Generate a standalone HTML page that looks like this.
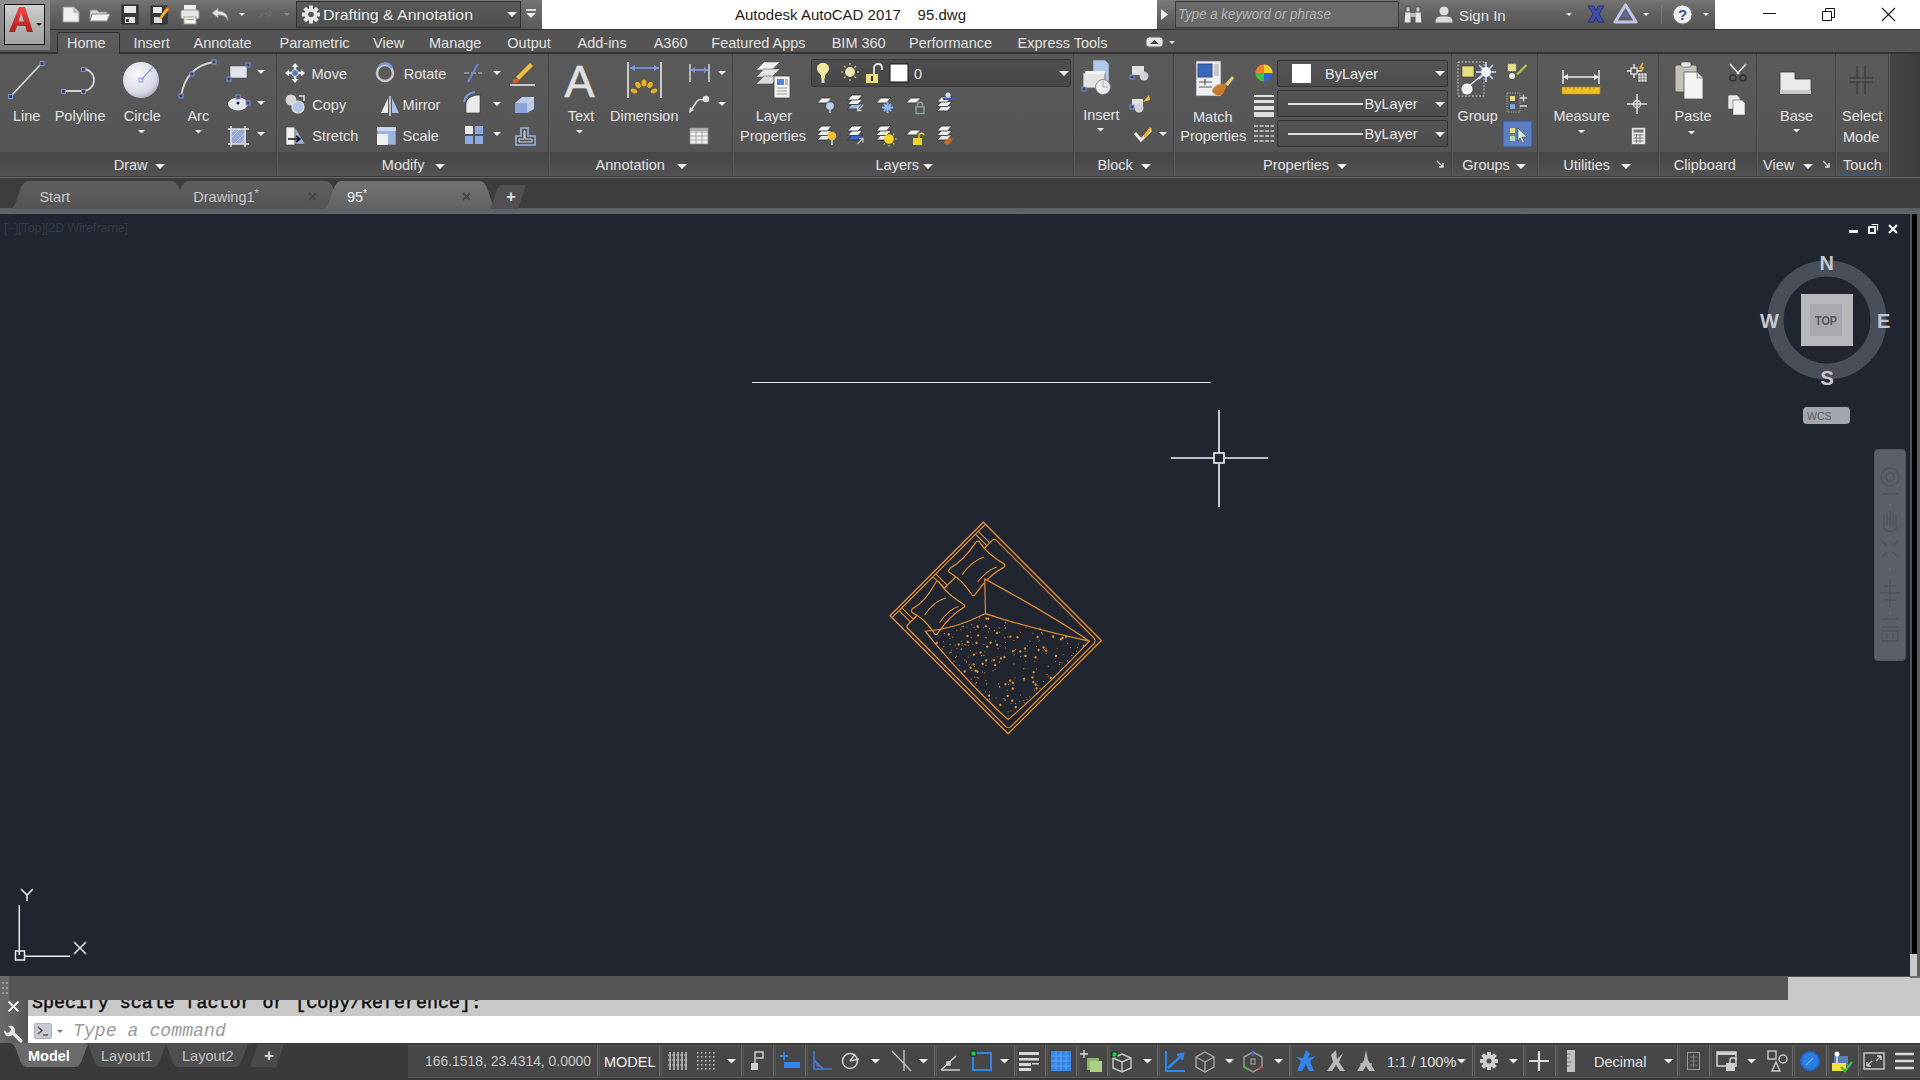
<!DOCTYPE html>
<html><head><meta charset="utf-8">
<style>
*{margin:0;padding:0;box-sizing:border-box}
html,body{width:1920px;height:1080px;overflow:hidden;background:#212530;font-family:"Liberation Sans",sans-serif;position:relative}
.a{position:absolute}
svg.a{overflow:visible}
.t{position:absolute;white-space:nowrap;line-height:1}
</style></head><body>

<div class="a" style="left:0px;top:0px;width:1920px;height:29px;background:linear-gradient(#747474,#626262 45%,#535353);"></div>
<div class="a" style="left:542px;top:0px;width:615px;height:29px;background:#ffffff;"></div>
<div class="a" style="left:1715px;top:0px;width:205px;height:29px;background:#ffffff;"></div>
<div class="a" style="left:296px;top:1px;width:225px;height:27px;background:linear-gradient(#5a5a5a,#4f4f4f);border:1px solid #2f2f2f"></div>
<div class="t" style="left:323px;top:6.80px;font-size:15px;color:#ececec;font-weight:normal;font-style:normal;font-family:'Liberation Sans';transform:scaleX(1.058);transform-origin:0 0">Drafting &amp; Annotation</div>
<svg class="a" style="left:507px;top:11.5px" width="10" height="5"><path d="M0 0H10L5 5Z" fill="#f0f0f0"/></svg>
<div class="a" style="left:521px;top:0px;width:21px;height:29px;background:linear-gradient(#737373,#5a5a5a);"></div>
<div class="t" style="left:735px;top:7.30px;font-size:15px;color:#1c1c1c;font-weight:normal;font-style:normal;font-family:'Liberation Sans';">Autodesk AutoCAD 2017&nbsp;&nbsp;&nbsp;&nbsp;95.dwg</div>
<div class="a" style="left:1157px;top:0px;width:18px;height:29px;background:linear-gradient(#7a7a7a,#555);"></div>
<svg class="a" style="left:1161px;top:9px" width="7" height="11"><path d="M0 0L7 5.5L0 11Z" fill="#eee"/></svg>
<div class="a" style="left:1175px;top:1px;width:224px;height:27px;background:#6a6a6a;border:1px solid #3a3a3a"></div>
<div class="t" style="left:1178px;top:7.15px;font-size:14px;color:#b4b4b4;font-weight:normal;font-style:italic;font-family:'Liberation Sans';transform:scaleX(0.95);transform-origin:0 0">Type a keyword or phrase</div>
<div class="a" style="left:1763px;top:13px;width:13px;height:1px;background:#111;"></div>
<svg class="a" style="left:1822px;top:8px" width="13" height="13"><path d="M0.5 3.5H9.5V12.5H0.5Z M3.5 3.5V0.5H12.5V9.5H9.5" fill="none" stroke="#111"/></svg>
<svg class="a" style="left:1882px;top:8px" width="13" height="13"><path d="M0 0L13 13M13 0L0 13" stroke="#111" stroke-width="1.1"/></svg>
<div class="t" style="left:1459px;top:7.60px;font-size:15px;color:#e6e6e6;font-weight:normal;font-style:normal;font-family:'Liberation Sans';">Sign In</div>
<div class="a" style="left:0px;top:29px;width:1920px;height:25px;background:#545454;border-top:1px solid #333"></div>
<div class="a" style="left:0px;top:52px;width:1920px;height:1.5px;background:#333333;"></div>
<div class="a" style="left:57px;top:32px;width:63px;height:23px;background:linear-gradient(#5c5c5c,#585858);border:1.5px solid #2e2e2e;border-bottom:none;border-radius:2px 2px 0 0"></div>
<div class="t" style="left:67px;top:35.73px;font-size:14.5px;color:#e2e2e2;font-weight:normal;font-style:normal;font-family:'Liberation Sans';">Home</div>
<div class="t" style="left:133.5px;top:35.73px;font-size:14.5px;color:#e2e2e2;font-weight:normal;font-style:normal;font-family:'Liberation Sans';">Insert</div>
<div class="t" style="left:193.5px;top:35.73px;font-size:14.5px;color:#e2e2e2;font-weight:normal;font-style:normal;font-family:'Liberation Sans';">Annotate</div>
<div class="t" style="left:279.5px;top:35.73px;font-size:14.5px;color:#e2e2e2;font-weight:normal;font-style:normal;font-family:'Liberation Sans';">Parametric</div>
<div class="t" style="left:373px;top:35.73px;font-size:14.5px;color:#e2e2e2;font-weight:normal;font-style:normal;font-family:'Liberation Sans';">View</div>
<div class="t" style="left:429px;top:35.73px;font-size:14.5px;color:#e2e2e2;font-weight:normal;font-style:normal;font-family:'Liberation Sans';">Manage</div>
<div class="t" style="left:507.3px;top:35.73px;font-size:14.5px;color:#e2e2e2;font-weight:normal;font-style:normal;font-family:'Liberation Sans';">Output</div>
<div class="t" style="left:577.5px;top:35.73px;font-size:14.5px;color:#e2e2e2;font-weight:normal;font-style:normal;font-family:'Liberation Sans';">Add-ins</div>
<div class="t" style="left:653.7px;top:35.73px;font-size:14.5px;color:#e2e2e2;font-weight:normal;font-style:normal;font-family:'Liberation Sans';">A360</div>
<div class="t" style="left:711.3px;top:35.73px;font-size:14.5px;color:#e2e2e2;font-weight:normal;font-style:normal;font-family:'Liberation Sans';">Featured Apps</div>
<div class="t" style="left:831.7px;top:35.73px;font-size:14.5px;color:#e2e2e2;font-weight:normal;font-style:normal;font-family:'Liberation Sans';">BIM 360</div>
<div class="t" style="left:909px;top:35.73px;font-size:14.5px;color:#e2e2e2;font-weight:normal;font-style:normal;font-family:'Liberation Sans';">Performance</div>
<div class="t" style="left:1017.6px;top:35.73px;font-size:14.5px;color:#e2e2e2;font-weight:normal;font-style:normal;font-family:'Liberation Sans';">Express Tools</div>
<div class="a" style="left:0px;top:0px;width:50px;height:50px;background:linear-gradient(#8e8e8e,#8a8a8a 60%,#7e7e7e);"></div>
<div class="a" style="left:4px;top:4px;width:41px;height:41px;background:linear-gradient(#d0d0d0,#b4b4b4 50%,#a4a4a4);border:1.5px solid #111"></div>
<svg class="a" style="left:6.5px;top:5px;" width="30" height="30" viewBox="0 0 30 30"><defs><linearGradient id="ga" x1="0" y1="0" x2="0" y2="1"><stop offset="0" stop-color="#f04848"/><stop offset="1" stop-color="#b01c1c"/></linearGradient></defs><path d="M2 27L12 2H18L26 27H20L18.3 21H10L8 27Z M11.5 16.5H16.8L14.2 7.5Z" fill="url(#ga)" fill-rule="evenodd"/></svg>
<svg class="a" style="left:36px;top:22.5px" width="6" height="3"><path d="M0 0H6L3 3Z" fill="#222"/></svg>
<div class="a" style="left:0px;top:54px;width:1920px;height:123px;background:linear-gradient(#5a5a5a,#535353);"></div>
<div class="a" style="left:1888px;top:54px;width:32px;height:123px;background:linear-gradient(90deg,#474747,#3c3c3c);"></div>
<div class="a" style="left:0px;top:152px;width:1888px;height:24px;background:linear-gradient(#464646,#4e4e4e 60%,#525252);"></div>
<div class="a" style="left:0px;top:176px;width:1920px;height:1px;background:#3a3a3a;"></div>
<div class="a" style="left:276px;top:54px;width:1px;height:122px;background:#444;"></div>
<div class="a" style="left:277px;top:54px;width:1px;height:122px;background:#5c5c5c;"></div>
<div class="a" style="left:548px;top:54px;width:1px;height:122px;background:#444;"></div>
<div class="a" style="left:549px;top:54px;width:1px;height:122px;background:#5c5c5c;"></div>
<div class="a" style="left:732px;top:54px;width:1px;height:122px;background:#444;"></div>
<div class="a" style="left:733px;top:54px;width:1px;height:122px;background:#5c5c5c;"></div>
<div class="a" style="left:1073px;top:54px;width:1px;height:122px;background:#444;"></div>
<div class="a" style="left:1074px;top:54px;width:1px;height:122px;background:#5c5c5c;"></div>
<div class="a" style="left:1173px;top:54px;width:1px;height:122px;background:#444;"></div>
<div class="a" style="left:1174px;top:54px;width:1px;height:122px;background:#5c5c5c;"></div>
<div class="a" style="left:1451px;top:54px;width:1px;height:122px;background:#444;"></div>
<div class="a" style="left:1452px;top:54px;width:1px;height:122px;background:#5c5c5c;"></div>
<div class="a" style="left:1537px;top:54px;width:1px;height:122px;background:#444;"></div>
<div class="a" style="left:1538px;top:54px;width:1px;height:122px;background:#5c5c5c;"></div>
<div class="a" style="left:1658px;top:54px;width:1px;height:122px;background:#444;"></div>
<div class="a" style="left:1659px;top:54px;width:1px;height:122px;background:#5c5c5c;"></div>
<div class="a" style="left:1756px;top:54px;width:1px;height:122px;background:#444;"></div>
<div class="a" style="left:1757px;top:54px;width:1px;height:122px;background:#5c5c5c;"></div>
<div class="a" style="left:1835px;top:54px;width:1px;height:122px;background:#444;"></div>
<div class="a" style="left:1836px;top:54px;width:1px;height:122px;background:#5c5c5c;"></div>
<div class="a" style="left:1888px;top:54px;width:1px;height:122px;background:#444;"></div>
<div class="a" style="left:1889px;top:54px;width:1px;height:122px;background:#5c5c5c;"></div>
<div class="t" style="left:13px;top:108.73px;font-size:14.5px;color:#e4e4e4;font-weight:normal;font-style:normal;font-family:'Liberation Sans';">Line</div>
<div class="t" style="left:54.7px;top:108.73px;font-size:14.5px;color:#e4e4e4;font-weight:normal;font-style:normal;font-family:'Liberation Sans';">Polyline</div>
<div class="t" style="left:123.7px;top:108.73px;font-size:14.5px;color:#e4e4e4;font-weight:normal;font-style:normal;font-family:'Liberation Sans';">Circle</div>
<div class="t" style="left:187.4px;top:108.73px;font-size:14.5px;color:#e4e4e4;font-weight:normal;font-style:normal;font-family:'Liberation Sans';">Arc</div>
<div class="t" style="left:113.7px;top:158.43px;font-size:14.5px;color:#e4e4e4;font-weight:normal;font-style:normal;font-family:'Liberation Sans';">Draw</div>
<svg class="a" style="left:155px;top:163.5px" width="10" height="5"><path d="M0 0H10L5 5Z" fill="#f0f0f0"/></svg>
<svg class="a" style="left:137.5px;top:130.25px" width="7.0" height="3.5"><path d="M0 0H7.0L3.5 3.5Z" fill="#f0f0f0"/></svg>
<svg class="a" style="left:194.5px;top:130.25px" width="7.0" height="3.5"><path d="M0 0H7.0L3.5 3.5Z" fill="#f0f0f0"/></svg>
<div class="t" style="left:311.5px;top:66.73px;font-size:14.5px;color:#e4e4e4;font-weight:normal;font-style:normal;font-family:'Liberation Sans';">Move</div>
<div class="t" style="left:403.7px;top:66.73px;font-size:14.5px;color:#e4e4e4;font-weight:normal;font-style:normal;font-family:'Liberation Sans';">Rotate</div>
<div class="t" style="left:312.3px;top:97.73px;font-size:14.5px;color:#e4e4e4;font-weight:normal;font-style:normal;font-family:'Liberation Sans';">Copy</div>
<div class="t" style="left:402.6px;top:97.73px;font-size:14.5px;color:#e4e4e4;font-weight:normal;font-style:normal;font-family:'Liberation Sans';">Mirror</div>
<div class="t" style="left:312.3px;top:128.73px;font-size:14.5px;color:#e4e4e4;font-weight:normal;font-style:normal;font-family:'Liberation Sans';">Stretch</div>
<div class="t" style="left:402.5px;top:128.73px;font-size:14.5px;color:#e4e4e4;font-weight:normal;font-style:normal;font-family:'Liberation Sans';">Scale</div>
<div class="t" style="left:381.8px;top:158.03px;font-size:14.5px;color:#e4e4e4;font-weight:normal;font-style:normal;font-family:'Liberation Sans';">Modify</div>
<svg class="a" style="left:435px;top:163.5px" width="10" height="5"><path d="M0 0H10L5 5Z" fill="#f0f0f0"/></svg>
<div class="t" style="left:567.7px;top:108.73px;font-size:14.5px;color:#e4e4e4;font-weight:normal;font-style:normal;font-family:'Liberation Sans';">Text</div>
<svg class="a" style="left:575.9px;top:130.25px" width="7.0" height="3.5"><path d="M0 0H7.0L3.5 3.5Z" fill="#f0f0f0"/></svg>
<div class="t" style="left:610px;top:108.73px;font-size:14.5px;color:#e4e4e4;font-weight:normal;font-style:normal;font-family:'Liberation Sans';">Dimension</div>
<div class="t" style="left:595.6px;top:158.03px;font-size:14.5px;color:#e4e4e4;font-weight:normal;font-style:normal;font-family:'Liberation Sans';">Annotation</div>
<svg class="a" style="left:676.7px;top:163.5px" width="10" height="5"><path d="M0 0H10L5 5Z" fill="#f0f0f0"/></svg>
<div class="t" style="left:755.7px;top:108.73px;font-size:14.5px;color:#e4e4e4;font-weight:normal;font-style:normal;font-family:'Liberation Sans';">Layer</div>
<div class="t" style="left:740px;top:128.73px;font-size:14.5px;color:#e4e4e4;font-weight:normal;font-style:normal;font-family:'Liberation Sans';">Properties</div>
<div class="t" style="left:875.5px;top:158.03px;font-size:14.5px;color:#e4e4e4;font-weight:normal;font-style:normal;font-family:'Liberation Sans';">Layers</div>
<svg class="a" style="left:923px;top:163.5px" width="10" height="5"><path d="M0 0H10L5 5Z" fill="#f0f0f0"/></svg>
<div class="t" style="left:1083.2px;top:108.23px;font-size:14.5px;color:#e4e4e4;font-weight:normal;font-style:normal;font-family:'Liberation Sans';">Insert</div>
<svg class="a" style="left:1096.5px;top:128.25px" width="7.0" height="3.5"><path d="M0 0H7.0L3.5 3.5Z" fill="#f0f0f0"/></svg>
<div class="t" style="left:1097.4px;top:158.43px;font-size:14.5px;color:#e4e4e4;font-weight:normal;font-style:normal;font-family:'Liberation Sans';">Block</div>
<svg class="a" style="left:1141px;top:163.5px" width="10" height="5"><path d="M0 0H10L5 5Z" fill="#f0f0f0"/></svg>
<div class="t" style="left:1193px;top:109.73px;font-size:14.5px;color:#e4e4e4;font-weight:normal;font-style:normal;font-family:'Liberation Sans';">Match</div>
<div class="t" style="left:1180.3px;top:129.43px;font-size:14.5px;color:#e4e4e4;font-weight:normal;font-style:normal;font-family:'Liberation Sans';">Properties</div>
<div class="t" style="left:1263px;top:158.43px;font-size:14.5px;color:#e4e4e4;font-weight:normal;font-style:normal;font-family:'Liberation Sans';">Properties</div>
<svg class="a" style="left:1337px;top:163.5px" width="10" height="5"><path d="M0 0H10L5 5Z" fill="#f0f0f0"/></svg>
<div class="t" style="left:1457.4px;top:108.53px;font-size:14.5px;color:#e4e4e4;font-weight:normal;font-style:normal;font-family:'Liberation Sans';">Group</div>
<div class="t" style="left:1462.3px;top:158.03px;font-size:14.5px;color:#e4e4e4;font-weight:normal;font-style:normal;font-family:'Liberation Sans';">Groups</div>
<svg class="a" style="left:1516px;top:163.5px" width="10" height="5"><path d="M0 0H10L5 5Z" fill="#f0f0f0"/></svg>
<div class="t" style="left:1553.4px;top:108.73px;font-size:14.5px;color:#e4e4e4;font-weight:normal;font-style:normal;font-family:'Liberation Sans';">Measure</div>
<svg class="a" style="left:1577.5px;top:130.25px" width="7.0" height="3.5"><path d="M0 0H7.0L3.5 3.5Z" fill="#f0f0f0"/></svg>
<div class="t" style="left:1563.3px;top:158.03px;font-size:14.5px;color:#e4e4e4;font-weight:normal;font-style:normal;font-family:'Liberation Sans';">Utilities</div>
<svg class="a" style="left:1621px;top:163.5px" width="10" height="5"><path d="M0 0H10L5 5Z" fill="#f0f0f0"/></svg>
<div class="t" style="left:1674.6px;top:108.73px;font-size:14.5px;color:#e4e4e4;font-weight:normal;font-style:normal;font-family:'Liberation Sans';">Paste</div>
<svg class="a" style="left:1687.5px;top:131.25px" width="7.0" height="3.5"><path d="M0 0H7.0L3.5 3.5Z" fill="#f0f0f0"/></svg>
<div class="t" style="left:1673.8px;top:158.03px;font-size:14.5px;color:#e4e4e4;font-weight:normal;font-style:normal;font-family:'Liberation Sans';">Clipboard</div>
<div class="t" style="left:1780px;top:108.73px;font-size:14.5px;color:#e4e4e4;font-weight:normal;font-style:normal;font-family:'Liberation Sans';">Base</div>
<svg class="a" style="left:1792.5px;top:129.25px" width="7.0" height="3.5"><path d="M0 0H7.0L3.5 3.5Z" fill="#f0f0f0"/></svg>
<div class="t" style="left:1763px;top:158.03px;font-size:14.5px;color:#e4e4e4;font-weight:normal;font-style:normal;font-family:'Liberation Sans';">View</div>
<svg class="a" style="left:1803px;top:163.5px" width="10" height="5"><path d="M0 0H10L5 5Z" fill="#f0f0f0"/></svg>
<svg class="a" style="left:1821px;top:159px;" width="10" height="10" viewBox="0 0 10 10"><path d="M2 2L8 8M8 4V8H4" fill="none" stroke="#e0e0e0" stroke-width="1.3"/></svg>
<div class="a" style="left:1838px;top:174px;width:48px;height:2px;background:#3a5a7a;"></div>
<div class="t" style="left:1842px;top:108.73px;font-size:14.5px;color:#e4e4e4;font-weight:normal;font-style:normal;font-family:'Liberation Sans';">Select</div>
<div class="t" style="left:1843px;top:129.53px;font-size:14.5px;color:#e4e4e4;font-weight:normal;font-style:normal;font-family:'Liberation Sans';">Mode</div>
<div class="t" style="left:1843px;top:158.03px;font-size:14.5px;color:#e4e4e4;font-weight:normal;font-style:normal;font-family:'Liberation Sans';">Touch</div>
<svg class="a" style="left:62px;top:6px;" width="18" height="17" viewBox="0 0 18 17"><path d="M1 1H12L17 6V16H1Z" fill="#efefef" stroke="#9a9a9a" stroke-width="1"/><path d="M12 1V6H17" fill="#cfcfcf" stroke="#9a9a9a"/></svg>
<svg class="a" style="left:89px;top:7px;" width="22" height="15" viewBox="0 0 22 15"><path d="M1 3H8L10 5H18V14H1Z" fill="#d8d8d8" stroke="#8a8a8a"/><path d="M3 7H21L18 14H1Z" fill="#f2f2f2" stroke="#8a8a8a"/></svg>
<svg class="a" style="left:121px;top:4px;" width="18" height="21" viewBox="0 0 18 21"><rect x="1" y="1" width="16" height="19" fill="#3a3a3a" stroke="#2a2a2a"/><rect x="3" y="2" width="12" height="7" fill="#e8e8e8"/><rect x="4" y="13" width="10" height="6" fill="#dcdcdc"/><rect x="5" y="15" width="3" height="3" fill="#333"/></svg>
<svg class="a" style="left:150px;top:4px;" width="20" height="21" viewBox="0 0 20 21"><rect x="1" y="2" width="16" height="18" fill="#3a3a3a" stroke="#2a2a2a"/><rect x="3" y="3" width="9" height="6" fill="#e8e8e8"/><rect x="4" y="13" width="8" height="6" fill="#dcdcdc"/><path d="M9 14L17 3L19.5 5L11 15.5Z" fill="#f0b030"/><path d="M17 3L19.5 5L18.5 6L16 4Z" fill="#e05050"/></svg>
<svg class="a" style="left:180px;top:4px;" width="20" height="21" viewBox="0 0 20 21"><rect x="4" y="1" width="12" height="6" fill="#f0f0f0"/><rect x="1" y="6" width="18" height="9" rx="2" fill="#e8e8e8" stroke="#999"/><rect x="4" y="13" width="12" height="7" fill="#fafafa" stroke="#9a9a9a"/><rect x="6" y="15" width="8" height="1" fill="#7aa0d8"/></svg>
<svg class="a" style="left:211px;top:7px;" width="19" height="15" viewBox="0 0 19 15"><path d="M7 1L1 6L7 11V8C12 8 15 9 17 14C17 7 13 4 7 4Z" fill="#e4e4e4" stroke="#8a8a8a"/></svg>
<svg class="a" style="left:239px;top:12.5px" width="6" height="3"><path d="M0 0H6L3 3Z" fill="#eaeaea"/></svg>
<svg class="a" style="left:257px;top:7px;" width="18" height="15" viewBox="0 0 18 15"><path d="M11 1L17 6L11 11V8C6 8 3 9 1 14C1 7 5 4 11 4Z" fill="#6a6a6a" stroke="#606060"/></svg>
<svg class="a" style="left:284px;top:12.5px" width="6" height="3"><path d="M0 0H6L3 3Z" fill="#8a8a8a"/></svg>
<svg class="a" style="left:302px;top:5px;" width="18" height="19" viewBox="0 0 18 19"><g transform="translate(9 9.5)"><circle r="6.3" fill="#e6e6e6"/><g fill="#e6e6e6"><rect x="-2" y="-9" width="4" height="4"/><rect x="-2" y="5" width="4" height="4"/><rect x="-9" y="-2" width="4" height="4"/><rect x="5" y="-2" width="4" height="4"/><rect x="-2" y="-9" width="4" height="4" transform="rotate(45)"/><rect x="-2" y="5" width="4" height="4" transform="rotate(45)"/><rect x="-9" y="-2" width="4" height="4" transform="rotate(45)"/><rect x="5" y="-2" width="4" height="4" transform="rotate(45)"/></g><circle r="2.8" fill="#555"/></g></svg>
<svg class="a" style="left:525px;top:8px;" width="12" height="12" viewBox="0 0 12 12"><rect x="1" y="1" width="10" height="2" fill="#ddd"/><path d="M1 5H11L6 10Z" fill="#eee"/></svg>
<svg class="a" style="left:1403px;top:5px;" width="20" height="19" viewBox="0 0 20 19"><path d="M2 6H8V18H1Z M12 6H18L19 18H12Z" fill="#e6e6e6" stroke="#555"/><rect x="3" y="2" width="4" height="5" fill="#d0d0d0" stroke="#555"/><rect x="13" y="2" width="4" height="5" fill="#d0d0d0" stroke="#555"/><rect x="7" y="8" width="6" height="4" fill="#bbb"/></svg>
<svg class="a" style="left:1434px;top:4px;" width="20" height="20" viewBox="0 0 20 20"><circle cx="10" cy="7" r="5" fill="#e0e0e0" stroke="#666"/><path d="M1 19C1 12 5 12 10 12C15 12 19 12 19 19Z" fill="#dcdcdc" stroke="#666"/></svg>
<svg class="a" style="left:1566px;top:12.5px" width="6" height="3"><path d="M0 0H6L3 3Z" fill="#eee"/></svg>
<svg class="a" style="left:1586px;top:4px;" width="20" height="20" viewBox="0 0 20 20"><path d="M2 2H8L10 7L12 2H18L13 10L18 18H12L10 13L8 18H2L7 10Z" fill="#4050a8" stroke="#2a3370"/></svg>
<svg class="a" style="left:1613px;top:3px;" width="25" height="22" viewBox="0 0 25 22"><path d="M12.5 2L23 19H2Z" fill="none" stroke="#c0c4e8" stroke-width="3.2" stroke-linejoin="round"/><path d="M12.5 8L16 14H9Z" fill="#5a6ab8"/></svg>
<svg class="a" style="left:1643px;top:12.5px" width="6" height="3"><path d="M0 0H6L3 3Z" fill="#eee"/></svg>
<div class="a" style="left:1661px;top:5px;width:1px;height:19px;background:#7a7a7a;"></div>
<svg class="a" style="left:1672px;top:4px;" width="21" height="21" viewBox="0 0 21 21"><circle cx="10.5" cy="10.5" r="9.5" fill="#f0f0f0" stroke="#777"/><text x="10.5" y="16" text-anchor="middle" font-family="Liberation Sans" font-weight="bold" font-size="15" fill="#3a4cb0">?</text></svg>
<svg class="a" style="left:1703px;top:12.5px" width="6" height="3"><path d="M0 0H6L3 3Z" fill="#eee"/></svg>
<svg class="a" style="left:1145px;top:36px;" width="19" height="12" viewBox="0 0 19 12"><rect x="1" y="1" width="17" height="10" rx="3" fill="#e6e6e6" stroke="#666"/><path d="M5 8L9.5 4L14 8Z" fill="#444"/></svg>
<svg class="a" style="left:1169px;top:40.5px" width="6" height="3"><path d="M0 0H6L3 3Z" fill="#eee"/></svg>
<svg class="a" style="left:0px;top:54px;" width="276" height="98" viewBox="0 0 276 98"><path d="M11 42L41 10" stroke="#d4d4d4" stroke-width="1.8"/><rect x="8.5" y="40.5" width="4" height="4" fill="#3d4660" stroke="#7c94dc" stroke-width="1"/><rect x="40" y="7.5" width="4" height="4" fill="#3d4660" stroke="#7c94dc" stroke-width="1"/><path d="M64 37H83A11 11 0 0 0 83 15" fill="none" stroke="#d4d4d4" stroke-width="1.8"/><rect x="61.5" y="35.5" width="4" height="4" fill="#3d4660" stroke="#7c94dc" stroke-width="1"/><rect x="81.5" y="35.5" width="4" height="4" fill="#3d4660" stroke="#7c94dc" stroke-width="1"/><rect x="81.5" y="13.5" width="4" height="4" fill="#3d4660" stroke="#7c94dc" stroke-width="1"/><defs><radialGradient id="gc" cx="0.4" cy="0.35" r="0.75"><stop offset="0" stop-color="#fbfbff"/><stop offset="0.7" stop-color="#d6d8e4"/><stop offset="1" stop-color="#9a9ca8"/></radialGradient></defs><circle cx="141" cy="26" r="18" fill="url(#gc)"/><path d="M141 26L153 13" stroke="#8aa4e8" stroke-width="1.2"/><rect x="139" y="24" width="4" height="4" fill="none" stroke="#8aa4e8"/><path d="M181 43C184 22 195 11 214 8" fill="none" stroke="#d4d4d4" stroke-width="1.8"/><rect x="179" y="40" width="4" height="4" fill="#3d4660" stroke="#7c94dc" stroke-width="1"/><rect x="190" y="18" width="4" height="4" fill="#3d4660" stroke="#7c94dc" stroke-width="1"/><rect x="212" y="6" width="4" height="4" fill="#3d4660" stroke="#7c94dc" stroke-width="1"/><rect x="230" y="12" width="17" height="12" fill="#e4e4ec" stroke="#444" stroke-width="0.5"/><rect x="227" y="23" width="4" height="4" fill="#3d4660" stroke="#7c94dc" stroke-width="1"/><rect x="246" y="9" width="4" height="4" fill="#3d4660" stroke="#7c94dc" stroke-width="1"/><ellipse cx="238" cy="50" rx="10" ry="6.5" fill="#e4e4ec"/><circle cx="238" cy="49" r="1.5" fill="#222"/><rect x="236" y="41" width="4" height="4" fill="#3d4660" stroke="#7c94dc" stroke-width="1"/><rect x="246" y="47" width="4" height="4" fill="#3d4660" stroke="#7c94dc" stroke-width="1"/><rect x="230" y="75" width="16" height="15" fill="#9aa8d8"/><path d="M230 85L240 75M234 90L246 78M230 80L235 75M240 90L246 84" stroke="#c8d0f0" stroke-width="1"/><path d="M228 75H249M228 90H249M231 72V93M245 72V93" stroke="#e0e0e0" stroke-width="1.5"/></svg>
<svg class="a" style="left:257px;top:70.0px" width="8" height="4"><path d="M0 0H8L4 4Z" fill="#f0f0f0"/></svg>
<svg class="a" style="left:257px;top:101.0px" width="8" height="4"><path d="M0 0H8L4 4Z" fill="#f0f0f0"/></svg>
<svg class="a" style="left:257px;top:132.0px" width="8" height="4"><path d="M0 0H8L4 4Z" fill="#f0f0f0"/></svg>
<svg class="a" style="left:276px;top:54px;" width="272" height="98" viewBox="0 0 272 98"><path d="M19 13V25M13 19H25" stroke="#e8e8e8" stroke-width="2.4"/><path d="M19 9L15.5 13H22.5Z M19 29L15.5 25H22.5Z M9 19L13 15.5V22.5Z M29 19L25 15.5V22.5Z" fill="#f0f0f0"/><circle cx="19" cy="19" r="3.5" fill="#5a78c8" stroke="#dde" stroke-width="1"/><circle cx="109" cy="19" r="8" fill="none" stroke="#c8c8c8" stroke-width="2.5"/><path d="M103 12A8 8 0 0 1 116 14" fill="none" stroke="#7c98d8" stroke-width="2.5"/><circle cx="15" cy="46" r="5.5" fill="#d8d8d8"/><circle cx="22" cy="53" r="6" fill="#b0c4e8" stroke="#e8e8e8" stroke-width="1.2"/><path d="M23 42H28V47" fill="none" stroke="#e0e0e0" stroke-width="1.5"/><path d="M114 42V62" stroke="#e0e0e0" stroke-width="1.5"/><path d="M112 44L105 59H112Z" fill="#e8e8e8"/><path d="M116 44L123 59H116Z" fill="#a8bde8"/><rect x="10" y="73" width="9" height="18" fill="#f0f0f0" stroke="#444" stroke-width="0.7"/><path d="M19 73L29 90H19Z" fill="#9ab4e0" stroke="#444" stroke-width="0.5"/><path d="M12 85H23M20 82L24 85L20 88" fill="none" stroke="#111" stroke-width="1.6"/><rect x="101" y="73" width="19" height="18" fill="#9ab4e0" stroke="#444" stroke-width="0.5"/><rect x="101" y="80" width="11" height="11" fill="#f0f0f0"/><rect x="101" y="73" width="19" height="4" fill="#c8d6f0"/><path d="M188 19H206" stroke="#9aa0b0" stroke-width="1.5" stroke-dasharray="5 2"/><path d="M192 28L202 10" stroke="#6c8cd8" stroke-width="1.8"/><path d="M240 23L254 9L257 12L243 26Z" fill="#f0c040"/><path d="M238 25C236 27 237 29 239 29C242 29 244 27 243 25Z" fill="#e05a28"/><path d="M234 31H259" stroke="#e8e8e8" stroke-width="1.6"/><path d="M190 59V50C190 45 195 41 204 41V59Z" fill="#eaeaea" stroke="#333" stroke-width="0.6"/><path d="M188 48C189 43 193 39 199 38" fill="none" stroke="#7c98d8" stroke-width="2"/><path d="M239 49L246 43H258L258 55L251 59H239Z" fill="#b8c8e8"/><path d="M239 49H251V59H239Z" fill="#8aa6d8"/><path d="M251 49L258 43" stroke="#e8e8e8"/><rect x="189" y="72" width="8" height="8" fill="#e8e8e8"/><rect x="199" y="72" width="8" height="8" fill="#8aaae0"/><rect x="189" y="82" width="8" height="8" fill="#8aaae0"/><rect x="199" y="82" width="8" height="8" fill="#8aaae0"/><path d="M240 91V82H245V74H252V82H259V91Z" fill="none" stroke="#9ab0d8" stroke-width="1.6"/><path d="M243 88V85H248V77H249V85H256V88Z" fill="none" stroke="#d0d8e8" stroke-width="1"/></svg>
<svg class="a" style="left:493px;top:71.0px" width="8" height="4"><path d="M0 0H8L4 4Z" fill="#f0f0f0"/></svg>
<svg class="a" style="left:493px;top:102.0px" width="8" height="4"><path d="M0 0H8L4 4Z" fill="#f0f0f0"/></svg>
<svg class="a" style="left:493px;top:132.0px" width="8" height="4"><path d="M0 0H8L4 4Z" fill="#f0f0f0"/></svg>
<div class="t" style="left:564.5px;top:59.41px;font-size:45px;color:#e0e0e0;font-weight:normal;font-style:normal;font-family:'Liberation Sans';-webkit-text-stroke:0.6px #e0e0e0">A</div>
<svg class="a" style="left:549px;top:54px;" width="183" height="98" viewBox="0 0 183 98"><path d="M79 8V44M112 8V44" stroke="#d8d8d8" stroke-width="1.8"/><path d="M81 14H110" stroke="#7c98e0" stroke-width="1.6"/><path d="M81 14L86 11V17Z M110 14L105 11V17Z" fill="#7c98e0"/><g fill="#e8b020"><ellipse cx="95" cy="29" rx="2.5" ry="3.5"/><ellipse cx="89" cy="31" rx="2.5" ry="3.3" transform="rotate(-35 89 31)"/><ellipse cx="101" cy="31" rx="2.5" ry="3.3" transform="rotate(35 101 31)"/><ellipse cx="85" cy="37" rx="2.2" ry="3.4" transform="rotate(-65 85 37)"/><ellipse cx="105" cy="37" rx="2.2" ry="3.4" transform="rotate(65 105 37)"/></g><path d="M141 10V28M160 10V28" stroke="#d8d8d8" stroke-width="1.5"/><path d="M142 16H159" stroke="#7c98e0" stroke-width="1.8"/><path d="M142 16L146 13V19Z M159 16L155 13V19Z" fill="#7c98e0"/><path d="M141 58L148 47C150 45 152 45 155 46" fill="none" stroke="#d8d8d8" stroke-width="1.6"/><circle cx="157" cy="45" r="3.3" fill="#e0e0e0"/><path d="M140 59L141 53L145 56Z" fill="#d8d8d8"/><rect x="141" y="74" width="18" height="16" fill="#f0f0f0" stroke="#888" stroke-width="0.7"/><path d="M141 78H159M141 82H159M141 86H159M147 74V90M153 74V90" stroke="#9a9a9a" stroke-width="0.8"/><rect x="141" y="74" width="18" height="3" fill="#aaa"/></svg>
<svg class="a" style="left:718px;top:71.0px" width="8" height="4"><path d="M0 0H8L4 4Z" fill="#f0f0f0"/></svg>
<svg class="a" style="left:718px;top:102.0px" width="8" height="4"><path d="M0 0H8L4 4Z" fill="#f0f0f0"/></svg>
<svg class="a" style="left:750px;top:58px;" width="48" height="44" viewBox="0 0 48 44"><path d="M6 12L14 4H30L22 12Z" fill="#f2f2f2" stroke="#555" stroke-width="0.6"/><path d="M6 19L14 11H30L22 19Z" fill="#e6e6e6" stroke="#555" stroke-width="0.6"/><path d="M6 26L14 18H30L22 26Z" fill="#dcdcdc" stroke="#555" stroke-width="0.6"/><rect x="24" y="18" width="16" height="22" fill="#f4f4f4" stroke="#444" stroke-width="0.8"/><rect x="27" y="21" width="7" height="6" fill="#5a84d8"/><path d="M27 30H37M27 33H37M27 36H37" stroke="#999" stroke-width="1"/><rect x="35" y="21" width="3" height="6" fill="#bbb"/></svg>
<div class="a" style="left:811px;top:59px;width:260px;height:28px;background:linear-gradient(#4e4e4e,#474747);border:1px solid #3a3a3a;border-radius:2px"></div>
<svg class="a" style="left:815px;top:62px;" width="100" height="24" viewBox="0 0 100 24"><path d="M6 13C3 11 2 8 2 6C2 3 4.5 1 8 1C11.5 1 14 3 14 6C14 8 13 11 10 13V16H6Z" fill="#f4e8a0"/><rect x="6.5" y="16" width="3" height="5" fill="#ddd"/><circle cx="35" cy="10" r="5" fill="#f6e8b0"/><g stroke="#d8cfa0" stroke-width="1.2"><path d="M35 1V3M35 17V19M26 10H28M42 10H44M29 4L30.5 5.5M39.5 14.5L41 16M29 16L30.5 14.5M39.5 5.5L41 4"/></g><rect x="51" y="12" width="12" height="9" fill="#f0e080"/><rect x="56" y="14" width="2" height="5" fill="#333"/><path d="M59 12V6C59 3 61 2 63 2C65 2 67 3 67 6V8" fill="none" stroke="#e8e8e8" stroke-width="1.8"/><rect x="75" y="2" width="18" height="18" fill="#ffffff" stroke="#111" stroke-width="1"/></svg>
<div class="t" style="left:914px;top:66.73px;font-size:14.5px;color:#e6e6e6;font-weight:normal;font-style:normal;font-family:'Liberation Sans';">0</div>
<svg class="a" style="left:1059px;top:70.5px" width="10" height="5"><path d="M0 0H10L5 5Z" fill="#f0f0f0"/></svg>
<svg class="a" style="left:0;top:0" width="1920" height="200"><path d="M817 103L821.5 98H832L827.5 103Z" fill="#f2f2f2" stroke="#2e2e2e" stroke-width="0.8"/><circle cx="830" cy="106" r="3.8" fill="#b8d0f4"/><path d="M830 109V113" stroke="#e0e0e0" stroke-width="1.3"/><path d="M847.5 109L852.0 104H862.5L858.0 109Z" fill="#9ab8e8" stroke="#2e2e2e" stroke-width="0.8"/><path d="M847.5 104.5L852.0 99.5H862.5L858.0 104.5Z" fill="#f2f2f2" stroke="#2e2e2e" stroke-width="0.8"/><path d="M847.5 100L852.0 95H862.5L858.0 100Z" fill="#f2f2f2" stroke="#2e2e2e" stroke-width="0.8"/><path d="M863 105L857.5 110.5M857.5 106.5V110.5H861.5" fill="none" stroke="#c8c8c8" stroke-width="1.3"/><path d="M876 103L880.5 98H891L886.5 103Z" fill="#f2f2f2" stroke="#2e2e2e" stroke-width="0.8"/><g stroke="#8ab8f8" stroke-width="1.8"><path d="M887.5 102V113M882 107.5H893M883.8 103.8L891.2 111.2M891.2 103.8L883.8 111.2"/></g><path d="M906 103L910.5 98H921L916.5 103Z" fill="#f2f2f2" stroke="#2e2e2e" stroke-width="0.8"/><rect x="916" y="107" width="8" height="6.5" fill="none" stroke="#8aa898" stroke-width="1.4"/><path d="M917.5 107V104.5C917.5 101.5 922.5 101.5 922.5 104.5V107" fill="none" stroke="#8aa898" stroke-width="1.4"/><path d="M937 111L941.5 106H952L947.5 111Z" fill="#e8e8e8" stroke="#2e2e2e" stroke-width="0.8"/><path d="M937 106.5L941.5 101.5H952L947.5 106.5Z" fill="#f2f2f2" stroke="#2e2e2e" stroke-width="0.8"/><path d="M937 102L941.5 97H952L947.5 102Z" fill="#f2f2f2" stroke="#2e2e2e" stroke-width="0.8"/><circle cx="948" cy="95" r="2.6" fill="#c8dcf8"/><path d="M943 99H955" stroke="#3a5aa8" stroke-width="2"/><path d="M817 140L821.5 135H832L827.5 140Z" fill="#e8e8e8" stroke="#2e2e2e" stroke-width="0.8"/><path d="M817 135.5L821.5 130.5H832L827.5 135.5Z" fill="#f2f2f2" stroke="#2e2e2e" stroke-width="0.8"/><path d="M817 131L821.5 126H832L827.5 131Z" fill="#f2f2f2" stroke="#2e2e2e" stroke-width="0.8"/><circle cx="832" cy="136" r="4.2" fill="#f8c030"/><path d="M832 140V145" stroke="#eee" stroke-width="1.3"/><path d="M847.5 140L852.0 135H862.5L858.0 140Z" fill="#3a6ad0" stroke="#2e2e2e" stroke-width="0.8"/><path d="M847.5 135.5L852.0 130.5H862.5L858.0 135.5Z" fill="#f2f2f2" stroke="#2e2e2e" stroke-width="0.8"/><path d="M847.5 131L852.0 126H862.5L858.0 131Z" fill="#f2f2f2" stroke="#2e2e2e" stroke-width="0.8"/><path d="M857.5 144L863 138.5M859 138.5H863V142.5" fill="none" stroke="#bbb" stroke-width="1.3"/><path d="M876 140L880.5 135H891L886.5 140Z" fill="#e8e8e8" stroke="#2e2e2e" stroke-width="0.8"/><path d="M876 135.5L880.5 130.5H891L886.5 135.5Z" fill="#f2f2f2" stroke="#2e2e2e" stroke-width="0.8"/><path d="M876 131L880.5 126H891L886.5 131Z" fill="#f2f2f2" stroke="#2e2e2e" stroke-width="0.8"/><circle cx="889" cy="139" r="4.8" fill="#f8d820"/><g stroke="#f0d030" stroke-width="1.1"><path d="M889 131.5V133M889 145V146.5M881.5 139H883M895 139H896.5M883.7 133.7L884.8 134.8M893.2 143.2L894.3 144.3M883.7 144.3L884.8 143.2M893.2 134.8L894.3 133.7"/></g><path d="M906 135L910.5 130H921L916.5 135Z" fill="#f2f2f2" stroke="#2e2e2e" stroke-width="0.8"/><rect x="913" y="138" width="9" height="7" fill="#f0d030"/><path d="M919 138V135.5C919 132.5 924 132.5 924 135.5" fill="none" stroke="#f0d030" stroke-width="1.4"/><path d="M937 140L941.5 135H952L947.5 140Z" fill="#e8e8e8" stroke="#2e2e2e" stroke-width="0.8"/><path d="M937 135.5L941.5 130.5H952L947.5 135.5Z" fill="#f2f2f2" stroke="#2e2e2e" stroke-width="0.8"/><path d="M937 131L941.5 126H952L947.5 131Z" fill="#f2f2f2" stroke="#2e2e2e" stroke-width="0.8"/><path d="M944 143C945 139 950 137 953 139L950 143C948 145 946 145 944 143Z" fill="#c86a20"/></svg>
<svg class="a" style="left:1080px;top:58px;" width="50" height="42" viewBox="0 0 50 42"><path d="M13 2H25L29 6V30H13Z" fill="#b0c8ec" stroke="#666" stroke-width="0.6"/><rect x="3" y="15" width="22" height="15" fill="#e4e4e4" stroke="#555" stroke-width="0.7"/><rect x="5" y="13" width="20" height="3" fill="#f4f4f4"/><circle cx="23" cy="29" r="7.5" fill="#e8eaf0" stroke="#777" stroke-width="0.8"/><path d="M23 29V23M23 29H28" stroke="#999" stroke-width="0.8"/><rect x="2" y="29" width="4" height="4" fill="#3d4660" stroke="#7c94dc"/></svg>
<svg class="a" style="left:0;top:0" width="1920" height="200"><g transform="translate(1129 64)"><rect x="3" y="2" width="12" height="9" fill="#e0e0e0"/><circle cx="15" cy="12" r="4.5" fill="#d0d0d8"/><rect x="1" y="11" width="4" height="4" fill="#3d4660" stroke="#7c94dc"/></g><g transform="translate(1129 94)"><rect x="3" y="5" width="11" height="8" fill="#e0e0e0"/><circle cx="10" cy="14" r="4.5" fill="#d0d0d8"/><path d="M14 8L20 1L21 6Z" fill="#f0c030"/><rect x="1" y="11" width="4" height="4" fill="#3d4660" stroke="#7c94dc"/></g><g transform="translate(1133 125)"><path d="M2 8L8 15L18 5" fill="none" stroke="#e8e8e8" stroke-width="3"/><path d="M10 11L17 2L19 4L12 13Z" fill="#f0b030"/></g></svg>
<svg class="a" style="left:1159px;top:132.0px" width="8" height="4"><path d="M0 0H8L4 4Z" fill="#f0f0f0"/></svg>
<svg class="a" style="left:1190px;top:58px;" width="56" height="46" viewBox="0 0 56 46"><rect x="6" y="3" width="25" height="35" fill="#eef0f4" stroke="#666" stroke-width="0.7"/><rect x="8" y="6" width="14" height="13" fill="#3a68b8" stroke="#2a4a90"/><rect x="24" y="6" width="5" height="12" fill="#c8c8c8"/><path d="M9 24H22M9 29H22M15 21V27" stroke="#555" stroke-width="1.2"/><path d="M22 33C24 27 32 24 37 27L33 36C29 39 24 37 22 33Z" fill="#c87a2a"/><path d="M35 26L42 18L44 20L38 28Z" fill="#e8c878"/></svg>
<svg class="a" style="left:1253px;top:62px;" width="24" height="90" viewBox="0 0 24 90"><circle cx="11" cy="11" r="8.5" fill="#e04848"/><path d="M11 11V2.5A8.5 8.5 0 0 1 19.5 11Z" fill="#f0d020"/><path d="M11 11H19.5A8.5 8.5 0 0 1 11 19.5Z" fill="#3060e0"/><path d="M11 11V19.5A8.5 8.5 0 0 1 2.5 11Z" fill="#40c040"/><path d="M11 11H2.5A8.5 8.5 0 0 1 11 2.5Z" fill="#f08030"/><rect x="1" y="33" width="20" height="2" fill="#e0e0e0"/><rect x="1" y="38" width="20" height="3" fill="#e0e0e0"/><rect x="1" y="44" width="20" height="4" fill="#e0e0e0"/><rect x="1" y="50" width="20" height="5" fill="#e0e0e0"/><path d="M1 64H21M1 69H21M1 74H21M1 79H21" stroke="#d0d0d0" stroke-width="1.6" stroke-dasharray="4 1.5"/></svg>
<div class="a" style="left:1277px;top:60px;width:171px;height:27px;background:linear-gradient(#555,#4c4c4c);border:1px solid #353535;border-radius:2px"></div>
<div class="a" style="left:1277px;top:90px;width:171px;height:27px;background:linear-gradient(#555,#4c4c4c);border:1px solid #353535;border-radius:2px"></div>
<div class="a" style="left:1277px;top:120px;width:171px;height:27px;background:linear-gradient(#555,#4c4c4c);border:1px solid #353535;border-radius:2px"></div>
<div class="a" style="left:1292px;top:64px;width:19px;height:19px;background:#ffffff;"></div>
<div class="t" style="left:1325px;top:67.13px;font-size:14.5px;color:#ececec;font-weight:normal;font-style:normal;font-family:'Liberation Sans';">ByLayer</div>
<div class="a" style="left:1288px;top:103px;width:75px;height:1.5px;background:#e0e0e0;"></div>
<div class="t" style="left:1364.5px;top:96.53px;font-size:14.5px;color:#ececec;font-weight:normal;font-style:normal;font-family:'Liberation Sans';">ByLayer</div>
<div class="a" style="left:1288px;top:133px;width:75px;height:1.5px;background:#e0e0e0;"></div>
<div class="t" style="left:1364.5px;top:126.73px;font-size:14.5px;color:#ececec;font-weight:normal;font-style:normal;font-family:'Liberation Sans';">ByLayer</div>
<svg class="a" style="left:1435px;top:70.5px" width="10" height="5"><path d="M0 0H10L5 5Z" fill="#f0f0f0"/></svg>
<svg class="a" style="left:1435px;top:101.5px" width="10" height="5"><path d="M0 0H10L5 5Z" fill="#f0f0f0"/></svg>
<svg class="a" style="left:1435px;top:131.5px" width="10" height="5"><path d="M0 0H10L5 5Z" fill="#f0f0f0"/></svg>
<svg class="a" style="left:1435px;top:159px;" width="10" height="10" viewBox="0 0 10 10"><path d="M2 2L8 8M8 4V8H4" fill="none" stroke="#e0e0e0" stroke-width="1.3"/></svg>
<svg class="a" style="left:0;top:0" width="1920" height="200"><g transform="translate(1456 60)"><rect x="2" y="2" width="26" height="34" fill="none" stroke="#c8c8c8" stroke-width="1" stroke-dasharray="2 1.5"/><rect x="6" y="6" width="12" height="11" fill="#e8e080" stroke="#333" stroke-width="0.6"/><circle cx="11" cy="29" r="6" fill="#f0f0f0" stroke="#333" stroke-width="0.6"/><path d="M14 25L30 12" stroke="#e0e8ff" stroke-width="1.5"/><g stroke="#c8e0ff" stroke-width="1.6"><path d="M30 2V22M20 12H40M23 5L37 19M37 5L23 19"/></g><circle cx="30" cy="12" r="5" fill="#f4f8ff"/></g><g transform="translate(1507 62)"><rect x="1" y="2" width="8" height="7" fill="#e8e080" stroke="#bbb" stroke-width="0.8" stroke-dasharray="1.5 1"/><circle cx="5" cy="14" r="3" fill="#eee"/><path d="M9 12L19 2L20 4L11 13Z" fill="#a8d040"/></g><g transform="translate(1506 92)"><rect x="1" y="1" width="13" height="19" fill="none" stroke="#bbb" stroke-width="0.8" stroke-dasharray="1.5 1"/><rect x="4" y="4" width="5" height="5" fill="#e8e080"/><rect x="4" y="12" width="5" height="5" fill="#7aa0e0"/><path d="M14 6H21M17.5 2.5V9.5M14 14H21" stroke="#ddd" stroke-width="1.4"/></g><rect x="1503" y="121" width="29" height="26" fill="#5b7ec4" stroke="#3a5490" stroke-width="1"/><g transform="translate(1509 126)"><rect x="1" y="2" width="5" height="5" fill="#e8e080"/><rect x="1" y="10" width="5" height="5" fill="#b8d8a8"/><path d="M9 2L18 11L13 11L15.5 16L13.5 17L11 12L9 15Z" fill="#e0f0e0" stroke="#333" stroke-width="0.5"/></g><g transform="translate(1561 68)"><path d="M2 9H38" stroke="#e8e8e8" stroke-width="1.5"/><path d="M2 2V16M38 2V16" stroke="#e8e8e8" stroke-width="1.5"/><path d="M2 9L7 6V12Z M38 9L33 6V12Z" fill="#e8e8e8"/><rect x="1" y="19" width="38" height="7" fill="#f0c020" stroke="#b88a10" stroke-width="0.6"/><path d="M5 19V22M9 19V21M13 19V22M17 19V21M21 19V22M25 19V21M29 19V22M33 19V21" stroke="#a07810" stroke-width="0.8"/></g><g transform="translate(1627 62)"><path d="M7 2V16M0 9H14" stroke="#e8e8e8" stroke-width="1.4"/><rect x="4" y="6" width="6" height="6" fill="#555" stroke="#eee" stroke-width="1.2"/><path d="M16 1L13 6H16L14 10" fill="none" stroke="#f0b030" stroke-width="1.6"/><rect x="11" y="11" width="9" height="9" fill="#e0e0e0" stroke="#444" stroke-width="0.5"/><path d="M11 14H20M11 17H20M14 11V20M17 11V20" stroke="#555" stroke-width="0.6"/></g><g transform="translate(1626 93)"><path d="M11 1V21M1 11H21" stroke="#e0e0e0" stroke-width="1.4"/><circle cx="11" cy="11" r="3.5" fill="none" stroke="#e8e8e8" stroke-width="1.3"/></g><g transform="translate(1631 127)"><rect x="0.5" y="0.5" width="14" height="17" fill="#e8e8e8" stroke="#555" stroke-width="0.6"/><rect x="2.5" y="2.5" width="10" height="3" fill="#777"/><path d="M2.5 8H12.5M2.5 11H12.5M2.5 14H12.5M5.5 7V16M9 7V16" stroke="#777" stroke-width="0.9"/></g><g transform="translate(1673 60)"><rect x="2" y="5" width="22" height="27" rx="2" fill="#c4c0b8" stroke="#444" stroke-width="0.8"/><rect x="8" y="2" width="10" height="5" rx="2" fill="#e8e8e8" stroke="#555" stroke-width="0.6"/><path d="M11 12H24L30 18V39H11Z" fill="#f4f4f4" stroke="#555" stroke-width="0.8"/><path d="M24 12V18H30" fill="#d8d8d8" stroke="#555" stroke-width="0.6"/></g><g transform="translate(1727 62)"><path d="M3 2L12 12M19 2L10 12" stroke="#e8e8e8" stroke-width="1.6"/><circle cx="6" cy="16" r="3" fill="none" stroke="#333" stroke-width="1.6"/><circle cx="16" cy="16" r="3" fill="none" stroke="#333" stroke-width="1.6"/></g><g transform="translate(1727 94)"><path d="M1 1H10L13 4V15H1Z" fill="#e8e8e8" stroke="#555" stroke-width="0.6"/><path d="M6 6H15L18 9V21H6Z" fill="#f4f4f4" stroke="#555" stroke-width="0.6"/></g><g transform="translate(1779 70)"><path d="M1 2H16V9H32V24H1Z" fill="#eaeaea" stroke="#3a3a3a" stroke-width="0.8"/><path d="M1 20H32V24H1Z" fill="#c8c8c8"/></g><g transform="translate(1847 64)" opacity="0.55"><path d="M10 2V30M18 2V30M2 14H26M2 18H26" stroke="#2e2e2e" stroke-width="1.5"/><path d="M14 4V28M4 16H24" stroke="#777" stroke-width="1"/></g></svg>
<div class="a" style="left:0px;top:177px;width:1920px;height:37px;background:#3c3c3c;"></div>
<div class="a" style="left:0px;top:177px;width:1920px;height:1px;background:#6a6a6a;"></div>
<div class="a" style="left:0px;top:208px;width:1920px;height:6px;background:linear-gradient(#5a5f65,#62676c);"></div>
<svg width="0" height="0" style="position:absolute"><defs><linearGradient id="tg1" x1="0" y1="0" x2="0" y2="1"><stop offset="0" stop-color="#5f5f5f"/><stop offset="1" stop-color="#545454"/></linearGradient><linearGradient id="tg2" x1="0" y1="0" x2="0" y2="1"><stop offset="0" stop-color="#727272"/><stop offset="1" stop-color="#636363"/></linearGradient></defs></svg>
<svg class="a" style="left:10px;top:180px" width="180" height="29"><path d="M0 29 C8 29 8 2 18 1 H162 C172 2 172 29 180 29Z" fill="url(#tg1)"/></svg>
<svg class="a" style="left:170px;top:180px" width="174" height="29"><path d="M0 29 C8 29 8 2 18 1 H156 C166 2 166 29 174 29Z" fill="url(#tg1)"/></svg>
<svg class="a" style="left:323px;top:180px" width="175" height="29"><path d="M0 29 C8 29 8 2 18 1 H157 C167 2 167 29 175 29Z" fill="url(#tg2)"/></svg>
<svg class="a" style="left:488px;top:184px" width="38" height="25"><path d="M0 25 C6 25 6 2 14 1 H38 L30 25Z" fill="#505050"/></svg>
<div class="t" style="left:39.4px;top:189.73px;font-size:14.5px;color:#c8c8c8;font-weight:normal;font-style:normal;font-family:'Liberation Sans';">Start</div>
<div class="t" style="left:193.3px;top:189.73px;font-size:14.5px;color:#c8c8c8;font-weight:normal;font-style:normal;font-family:'Liberation Sans';">Drawing1</div>
<div class="t" style="left:254.5px;top:187.69px;font-size:11px;color:#c8c8c8;font-weight:normal;font-style:normal;font-family:'Liberation Sans';">*</div>
<div class="t" style="left:347px;top:189.73px;font-size:14.5px;color:#f0f0f0;font-weight:normal;font-style:normal;font-family:'Liberation Sans';">95</div>
<div class="t" style="left:363px;top:187.69px;font-size:11px;color:#f0f0f0;font-weight:normal;font-style:normal;font-family:'Liberation Sans';">*</div>
<div class="t" style="left:506px;top:187.61px;font-size:17px;color:#e0e0e0;font-weight:bold;font-style:normal;font-family:'Liberation Sans';">+</div>
<svg class="a" style="left:308px;top:192px" width="9" height="9"><path d="M1 1L8 8M8 1L1 8" stroke="#474747" stroke-width="2"/></svg>
<svg class="a" style="left:462px;top:192px" width="9" height="9"><path d="M1 1L8 8M8 1L1 8" stroke="#474747" stroke-width="2"/></svg>
<div class="a" style="left:0px;top:214px;width:1910px;height:762px;background:#212530;"></div>
<div class="a" style="left:1910px;top:214px;width:2px;height:762px;background:#4e525a;"></div>
<div class="a" style="left:1912px;top:214px;width:5px;height:740px;background:#000;"></div>
<div class="a" style="left:1910px;top:954px;width:7px;height:22px;background:#c8c9cc;"></div>
<div class="a" style="left:1917px;top:214px;width:3px;height:762px;background:#5e5e5e;"></div>
<div class="t" style="left:4px;top:221.84px;font-size:12px;color:#343944;font-weight:normal;font-style:normal;font-family:'Liberation Sans';transform:scaleX(1.03);transform-origin:0 0">[&minus;][Top][2D Wireframe]</div>
<div class="a" style="left:752px;top:381.5px;width:459px;height:1.6px;background:#ececec;"></div>
<svg class="a" style="left:1160px;top:400px;" width="120" height="120" viewBox="0 0 120 120"><path d="M59 10V53M59 64V107M11 58H54M65 58H108" stroke="#f4f4f4" stroke-width="1.6"/><rect x="54" y="53" width="10" height="10" fill="none" stroke="#f4f4f4" stroke-width="1.6"/></svg>
<svg class="a" style="left:10px;top:900px;" width="70" height="70" viewBox="0 0 70 70"><path d="M9.3 5V55M15 56.3H60" stroke="#ececec" stroke-width="1.5"/><rect x="5.5" y="51" width="9" height="9" fill="none" stroke="#ececec" stroke-width="1.5"/></svg>
<svg class="a" style="left:73px;top:941px" width="14" height="14"><path d="M1 1L13 13M13 1L1 13" stroke="#e8e8e8" stroke-width="1.6"/></svg>
<svg class="a" style="left:20px;top:888px" width="14" height="14"><path d="M1 1L7 7L13 1M7 7V13" fill="none" stroke="#e8e8e8" stroke-width="1.6"/></svg>
<div class="a" style="left:1849px;top:230px;width:9px;height:3px;background:#f4f4f4;"></div>
<svg class="a" style="left:1868px;top:223px" width="11" height="11"><path d="M1 4H7V10H1Z" fill="none" stroke="#f4f4f4" stroke-width="2"/><path d="M3.5 1.5H9.5V7.5" fill="none" stroke="#f4f4f4" stroke-width="1.2"/></svg>
<svg class="a" style="left:1888px;top:224px" width="10" height="10"><path d="M1 1L9 9M9 1L1 9" stroke="#f4f4f4" stroke-width="2.2"/></svg>
<svg class="a" style="left:1760px;top:250px" width="134" height="140"><circle cx="67" cy="70" r="51.5" fill="none" stroke="#4a4e58" stroke-width="16"/></svg>
<div class="a" style="left:1801px;top:294px;width:52px;height:52px;background:#b6b8bc;"></div>
<div class="a" style="left:1810px;top:304px;width:32px;height:32px;background:#a8aaae;"></div>
<div class="t" style="left:1815px;top:314.07px;font-size:13.5px;color:#55585e;font-weight:bold;font-style:normal;font-family:'Liberation Sans';transform:scaleX(0.8);transform-origin:0 0">TOP</div>
<div class="t" style="left:1819.5px;top:253.07px;font-size:20px;color:#c5c7cb;font-weight:bold;font-style:normal;font-family:'Liberation Sans';">N</div>
<div class="t" style="left:1820.5px;top:368.07px;font-size:20px;color:#c5c7cb;font-weight:bold;font-style:normal;font-family:'Liberation Sans';">S</div>
<div class="t" style="left:1760px;top:311.07px;font-size:20px;color:#c5c7cb;font-weight:bold;font-style:normal;font-family:'Liberation Sans';">W</div>
<div class="t" style="left:1877px;top:311.07px;font-size:20px;color:#c5c7cb;font-weight:bold;font-style:normal;font-family:'Liberation Sans';">E</div>
<div class="a" style="left:1803px;top:407px;width:47px;height:17px;background:#a3a6ad;border-radius:4px"></div>
<div class="t" style="left:1807px;top:411.11px;font-size:10.5px;color:#5b5e66;font-weight:normal;font-style:normal;font-family:'Liberation Sans';">WCS</div>
<div class="a" style="left:1874px;top:449px;width:32px;height:212px;background:#5b5f67;border-radius:4px;border:1px solid #50545b"></div>
<svg class="a" style="left:1874px;top:449px;" width="32" height="212" viewBox="0 0 32 212"><g fill="none" stroke="#50545b" stroke-width="1.3"><circle cx="16" cy="28" r="9"/><circle cx="16" cy="28" r="4"/><path d="M8 45H24M10 65V77M13 63V77M16 62V77M19 63V77M22 65V77M9 77C10 84 22 84 23 77"/><path d="M8 92L13 97M24 92L19 97M8 108L13 103M24 108L19 103"/><path d="M16 130V158M6 144H26M10 137H22M10 151H22"/><path d="M8 170H24M8 178H24"/><rect x="8" y="182" width="16" height="10"/><path d="M13 184V190M19 184V190"/></g><g fill="#686c74"><circle cx="16" cy="56" r="1"/><circle cx="16" cy="120" r="1"/><circle cx="16" cy="164" r="1"/></g></svg>
<div class="a" style="left:0px;top:976px;width:1920px;height:24px;background:#555555;"></div>
<div class="a" style="left:0px;top:976px;width:9px;height:24px;background:#6a6a6a;"></div>
<div class="a" style="left:1788px;top:977px;width:132px;height:23px;background:#c8c8c8;"></div>
<div class="a" style="left:1910px;top:976px;width:10px;height:2px;background:#6e6e6e;"></div>
<div class="a" style="left:0px;top:1000px;width:28px;height:43px;background:linear-gradient(90deg,#6a6a6a,#555);"></div>
<div class="a" style="left:28px;top:1000px;width:1892px;height:16px;background:#c8c8c8;"></div>
<div class="a" style="left:28px;top:1000px;width:1892px;height:16px;overflow:hidden">
<div class="t" style="left:4px;top:-6.03px;font-size:18.3px;color:#0a0a0a;font-weight:normal;font-style:normal;font-family:'Liberation Mono';-webkit-text-stroke:0.45px #0a0a0a">Specify scale factor or [Copy/Reference]:</div>
</div>
<div class="a" style="left:28px;top:1016px;width:1892px;height:27px;background:#ffffff;"></div>
<div class="a" style="left:34px;top:1023px;width:18px;height:16px;background:#c8cad2;border-radius:2px;border:1px solid #b0b2ba"></div>
<svg class="a" style="left:36px;top:1025px;" width="14" height="12" viewBox="0 0 14 12"><path d="M2 2L6 5.5L2 9" fill="none" stroke="#555" stroke-width="1.5"/><path d="M7 10H12" stroke="#555" stroke-width="1.4"/></svg>
<svg class="a" style="left:4px;top:1023px;" width="20" height="20" viewBox="0 0 20 20"><g transform="translate(20 0) scale(-1 1)"><path d="M3 18L11 10" stroke="#e8e8e8" stroke-width="3.2" stroke-linecap="round"/><path d="M10 11C8 8 9 4 12 3C13.5 2.5 15 2.6 16 3L13 6L14 9L17 10L19.5 7C20 9 19.5 11 18 12.5C16 14 13 13.5 10 11Z" fill="#e8e8e8"/></g></svg>
<svg class="a" style="left:1px;top:981px;" width="8" height="14" viewBox="0 0 8 14"><g fill="#9a9a9a"><rect x="1" y="1" width="2" height="2"/><rect x="5" y="1" width="2" height="2"/><rect x="1" y="6" width="2" height="2"/><rect x="5" y="6" width="2" height="2"/><rect x="1" y="11" width="2" height="2"/><rect x="5" y="11" width="2" height="2"/></g></svg>
<svg class="a" style="left:57px;top:1029.5px" width="6" height="3"><path d="M0 0H6L3 3Z" fill="#777"/></svg>
<div class="t" style="left:73px;top:1022.05px;font-size:18.2px;color:#9a9a9a;font-weight:normal;font-style:italic;font-family:'Liberation Mono';">Type a command</div>
<svg class="a" style="left:7px;top:1000px" width="13" height="13"><path d="M1.5 1.5L11.5 11.5M11.5 1.5L1.5 11.5" stroke="#f2f2f2" stroke-width="2"/></svg>
<div class="a" style="left:0px;top:1043px;width:1920px;height:37px;background:#3a3a3a;"></div>
<svg class="a" style="left:10px;top:1043px" width="82" height="25"><path d="M0 0 C8 0 8 23 16 24 H66 C74 23 74 0 82 0Z" fill="#6a6a6a"/></svg>
<svg class="a" style="left:84px;top:1043px" width="86" height="25"><path d="M0 0 C8 0 8 23 16 24 H70 C78 23 78 0 86 0Z" fill="#4e4e4e"/></svg>
<svg class="a" style="left:162px;top:1043px" width="90" height="25"><path d="M0 0 C8 0 8 23 16 24 H74 C82 23 82 0 90 0Z" fill="#4e4e4e"/></svg>
<svg class="a" style="left:250px;top:1044px" width="34" height="24"><path d="M8 0H34L26 23H0Z" fill="#4a4a4a"/></svg>
<div class="t" style="left:28px;top:1049.23px;font-size:14.5px;color:#ffffff;font-weight:bold;font-style:normal;font-family:'Liberation Sans';">Model</div>
<div class="t" style="left:101px;top:1049.23px;font-size:14.5px;color:#c4c4c4;font-weight:normal;font-style:normal;font-family:'Liberation Sans';">Layout1</div>
<div class="t" style="left:182px;top:1049.23px;font-size:14.5px;color:#c4c4c4;font-weight:normal;font-style:normal;font-family:'Liberation Sans';">Layout2</div>
<div class="t" style="left:264px;top:1046.61px;font-size:17px;color:#dddddd;font-weight:bold;font-style:normal;font-family:'Liberation Sans';">+</div>
<div class="a" style="left:408px;top:1045px;width:1512px;height:33px;background:#474747;border-top:1px solid #5a5a5a;border-bottom:1px solid #5a5a5a"></div>
<div class="t" style="left:425px;top:1055.23px;font-size:13.9px;color:#c8c8c8;font-weight:normal;font-style:normal;font-family:'Liberation Sans';">166.1518, 23.4314, 0.0000</div>
<div class="t" style="left:604px;top:1054.73px;font-size:14.5px;color:#f4f4f4;font-weight:normal;font-style:normal;font-family:'Liberation Sans';">MODEL</div>
<div class="a" style="left:597px;top:1046px;width:1px;height:30px;background:#6a6a6a;"></div>
<div class="a" style="left:599px;top:1046px;width:1px;height:30px;background:#5a5a5a;"></div>
<div class="a" style="left:659px;top:1046px;width:1px;height:30px;background:#6a6a6a;"></div>
<div class="a" style="left:661px;top:1046px;width:1px;height:30px;background:#5a5a5a;"></div>
<div class="a" style="left:741px;top:1046px;width:1px;height:30px;background:#6a6a6a;"></div>
<div class="a" style="left:743px;top:1046px;width:1px;height:30px;background:#5a5a5a;"></div>
<div class="a" style="left:773px;top:1046px;width:1px;height:30px;background:#6a6a6a;"></div>
<div class="a" style="left:775px;top:1046px;width:1px;height:30px;background:#5a5a5a;"></div>
<div class="a" style="left:805px;top:1046px;width:1px;height:30px;background:#6a6a6a;"></div>
<div class="a" style="left:807px;top:1046px;width:1px;height:30px;background:#5a5a5a;"></div>
<div class="a" style="left:934px;top:1046px;width:1px;height:30px;background:#6a6a6a;"></div>
<div class="a" style="left:936px;top:1046px;width:1px;height:30px;background:#5a5a5a;"></div>
<div class="a" style="left:1014px;top:1046px;width:1px;height:30px;background:#6a6a6a;"></div>
<div class="a" style="left:1016px;top:1046px;width:1px;height:30px;background:#5a5a5a;"></div>
<div class="a" style="left:1045px;top:1046px;width:1px;height:30px;background:#6a6a6a;"></div>
<div class="a" style="left:1047px;top:1046px;width:1px;height:30px;background:#5a5a5a;"></div>
<div class="a" style="left:1076px;top:1046px;width:1px;height:30px;background:#6a6a6a;"></div>
<div class="a" style="left:1078px;top:1046px;width:1px;height:30px;background:#5a5a5a;"></div>
<div class="a" style="left:1107px;top:1046px;width:1px;height:30px;background:#6a6a6a;"></div>
<div class="a" style="left:1109px;top:1046px;width:1px;height:30px;background:#5a5a5a;"></div>
<div class="a" style="left:1157px;top:1046px;width:1px;height:30px;background:#6a6a6a;"></div>
<div class="a" style="left:1159px;top:1046px;width:1px;height:30px;background:#5a5a5a;"></div>
<div class="a" style="left:1289px;top:1046px;width:1px;height:30px;background:#6a6a6a;"></div>
<div class="a" style="left:1291px;top:1046px;width:1px;height:30px;background:#5a5a5a;"></div>
<div class="a" style="left:1472px;top:1046px;width:1px;height:30px;background:#6a6a6a;"></div>
<div class="a" style="left:1474px;top:1046px;width:1px;height:30px;background:#5a5a5a;"></div>
<div class="a" style="left:1523px;top:1046px;width:1px;height:30px;background:#6a6a6a;"></div>
<div class="a" style="left:1525px;top:1046px;width:1px;height:30px;background:#5a5a5a;"></div>
<div class="a" style="left:1555px;top:1046px;width:1px;height:30px;background:#6a6a6a;"></div>
<div class="a" style="left:1557px;top:1046px;width:1px;height:30px;background:#5a5a5a;"></div>
<div class="a" style="left:1677px;top:1046px;width:1px;height:30px;background:#6a6a6a;"></div>
<div class="a" style="left:1679px;top:1046px;width:1px;height:30px;background:#5a5a5a;"></div>
<div class="a" style="left:1709px;top:1046px;width:1px;height:30px;background:#6a6a6a;"></div>
<div class="a" style="left:1711px;top:1046px;width:1px;height:30px;background:#5a5a5a;"></div>
<div class="a" style="left:1792px;top:1046px;width:1px;height:30px;background:#6a6a6a;"></div>
<div class="a" style="left:1794px;top:1046px;width:1px;height:30px;background:#5a5a5a;"></div>
<div class="a" style="left:1826px;top:1046px;width:1px;height:30px;background:#6a6a6a;"></div>
<div class="a" style="left:1828px;top:1046px;width:1px;height:30px;background:#5a5a5a;"></div>
<div class="a" style="left:1858px;top:1046px;width:1px;height:30px;background:#6a6a6a;"></div>
<div class="a" style="left:1860px;top:1046px;width:1px;height:30px;background:#5a5a5a;"></div>
<svg class="a" style="left:0;top:0" width="1920" height="1080"><g transform="translate(668 1052)" stroke="#d8d8d8" stroke-width="1.3"><path d="M2 0V18M6 0V18M10 0V18M14 0V18M18 0V18"/><path d="M0 3H20M0 8H20M0 13H20" stroke-width="0.9" stroke-dasharray="1 1"/></g><g transform="translate(697 1052)" fill="#bdbdbd"><rect x="0" y="0" width="1.6" height="1.6"/><rect x="0" y="4" width="1.6" height="1.6"/><rect x="0" y="8" width="1.6" height="1.6"/><rect x="0" y="12" width="1.6" height="1.6"/><rect x="0" y="16" width="1.6" height="1.6"/><rect x="4" y="0" width="1.6" height="1.6"/><rect x="4" y="4" width="1.6" height="1.6"/><rect x="4" y="8" width="1.6" height="1.6"/><rect x="4" y="12" width="1.6" height="1.6"/><rect x="4" y="16" width="1.6" height="1.6"/><rect x="8" y="0" width="1.6" height="1.6"/><rect x="8" y="4" width="1.6" height="1.6"/><rect x="8" y="8" width="1.6" height="1.6"/><rect x="8" y="12" width="1.6" height="1.6"/><rect x="8" y="16" width="1.6" height="1.6"/><rect x="12" y="0" width="1.6" height="1.6"/><rect x="12" y="4" width="1.6" height="1.6"/><rect x="12" y="8" width="1.6" height="1.6"/><rect x="12" y="12" width="1.6" height="1.6"/><rect x="12" y="16" width="1.6" height="1.6"/><rect x="16" y="0" width="1.6" height="1.6"/><rect x="16" y="4" width="1.6" height="1.6"/><rect x="16" y="8" width="1.6" height="1.6"/><rect x="16" y="12" width="1.6" height="1.6"/><rect x="16" y="16" width="1.6" height="1.6"/></g><g transform="translate(751 1051)"><rect x="0" y="12" width="7" height="7" fill="#d0d0d0"/><path d="M4 13V1H12V7H5" fill="none" stroke="#d0d0d0" stroke-width="1.5"/></g><g transform="translate(779 1051)"><path d="M1 5H9M5 1V9" stroke="#2f86e8" stroke-width="1.8"/><rect x="5" y="11" width="16" height="6" fill="#2f86e8"/></g><g transform="translate(812 1050)"><path d="M2 1V19H20M2 10L2 19L11 19Z" fill="none" stroke="#4a7ad8" stroke-width="1.6"/><path d="M5 12V16H9" fill="none" stroke="#4a7ad8" stroke-width="1.2"/></g><g transform="translate(841 1050)"><circle cx="9" cy="11" r="7.5" fill="none" stroke="#cfcfcf" stroke-width="1.6"/><path d="M9 11L18 9M9 11L14 4" stroke="#cfcfcf" stroke-width="1.3"/></g><g transform="translate(891 1050)" stroke="#bcbcbc" stroke-width="1.5"><path d="M1 1L20 21M13 0V21"/></g><g transform="translate(940 1052)" stroke="#cfcfcf" stroke-width="1.5" fill="none"><path d="M1 18H20M1 18L16 4"/><rect x="7" y="10" width="3" height="3" fill="#cfcfcf"/></g><g transform="translate(971 1050)"><rect x="2" y="3" width="18" height="17" fill="none" stroke="#2f86e8" stroke-width="2"/><rect x="0" y="1" width="5" height="5" fill="#20d040" stroke="#111" stroke-width="0.8"/></g><g transform="translate(1019 1051)" fill="#d8d8d8"><rect x="0" y="1" width="20" height="3"/><rect x="0" y="7" width="20" height="2.5"/><rect x="0" y="12" width="12" height="3"/><rect x="0" y="17" width="12" height="3"/><rect x="13" y="12" width="7" height="1.5"/></g><g transform="translate(1051 1051)"><rect x="0" y="0" width="20" height="20" fill="#2f86e8"/><path d="M0 5H20M0 10H20M0 15H20M5 0V20M10 0V20M15 0V20" stroke="#7ab0f0" stroke-width="0.7"/></g><g transform="translate(1081 1050)"><path d="M3 0V8M-1 4H7" stroke="#ddd" stroke-width="1.3"/><rect x="6" y="8" width="12" height="12" fill="#8ab868"/><rect x="9" y="11" width="12" height="11" fill="#a8d080"/></g><g transform="translate(1112 1050)"><path d="M10 4L19 8V18L10 22L1 18V8Z M1 8L10 12L19 8M10 12V22" fill="none" stroke="#c8c8c8" stroke-width="1.4"/><rect x="0" y="2" width="5" height="5" fill="#20d040" stroke="#111" stroke-width="0.8"/></g><g transform="translate(1164 1050)"><path d="M2 1V21H21" fill="none" stroke="#2f86e8" stroke-width="2"/><path d="M4 18L17 6M13 5L19 4L18 10" fill="none" stroke="#2f86e8" stroke-width="2.5"/></g><g transform="translate(1195 1050)"><path d="M10 2L19 7V17L10 22L1 17V7Z M1 7L10 12L19 7M10 12V22" fill="none" stroke="#a8a8a8" stroke-width="1.4"/></g><g transform="translate(1243 1050)"><path d="M10 2L19 7V17L10 22L1 17V7Z" fill="none" stroke="#9a9a9a" stroke-width="1.5"/><path d="M1 17L5 19" stroke="#40b040" stroke-width="2.5"/><path d="M19 17L15 19" stroke="#d04040" stroke-width="2.5"/><path d="M10 2V6" stroke="#4060d0" stroke-width="2.5"/><rect x="8" y="9" width="4" height="5" fill="none" stroke="#aaa"/></g><g transform="translate(1296 1049)"><path d="M10 1L14 5L12 9L20 7L14 12L18 22H13L10 15L6 22H1L5 12L0 8L7 9Z" fill="#2f86e8"/></g><g transform="translate(1326 1049)"><path d="M10 1L11 10L17 4L13 13L19 22H14L10 16L6 22H1L7 13L5 6Z" fill="#b8b8b8"/></g><g transform="translate(1356 1049)"><path d="M10 1L12 11L19 22H13L10 17L7 22H1L8 11Z" fill="#b8b8b8"/><path d="M4 15H16" stroke="#b8b8b8" stroke-width="1.5"/></g><g transform="translate(1489 1061)"><circle r="6.5" fill="#cfcfcf"/><rect x="-2" y="-9" width="4" height="4" fill="#cfcfcf" transform="rotate(0)"/><rect x="-2" y="-9" width="4" height="4" fill="#cfcfcf" transform="rotate(45)"/><rect x="-2" y="-9" width="4" height="4" fill="#cfcfcf" transform="rotate(90)"/><rect x="-2" y="-9" width="4" height="4" fill="#cfcfcf" transform="rotate(135)"/><rect x="-2" y="-9" width="4" height="4" fill="#cfcfcf" transform="rotate(180)"/><rect x="-2" y="-9" width="4" height="4" fill="#cfcfcf" transform="rotate(225)"/><rect x="-2" y="-9" width="4" height="4" fill="#cfcfcf" transform="rotate(270)"/><rect x="-2" y="-9" width="4" height="4" fill="#cfcfcf" transform="rotate(315)"/><circle r="2.5" fill="#4a4a4a"/></g><path d="M1539 1051V1071M1529 1061H1549" stroke="#dcdcdc" stroke-width="2.2"/><rect x="1567" y="1050" width="8" height="22" fill="#c0c0c0"/><path d="M1567 1054H1571M1567 1058H1570M1567 1062H1571M1567 1066H1570" stroke="#666" stroke-width="0.8"/><g transform="translate(1687 1052)"><rect x="0.5" y="0.5" width="12" height="17" fill="none" stroke="#9a9a9a"/><path d="M3 5H10M3 9H10M3 13H10M6.5 3V15" stroke="#8a8a8a" stroke-width="0.8"/></g><g transform="translate(1716 1050)"><rect x="1" y="2" width="19" height="14" fill="none" stroke="#cfcfcf" stroke-width="1.6"/><rect x="1" y="2" width="19" height="3" fill="#cfcfcf"/><rect x="10" y="13" width="9" height="8" fill="#cfcfcf"/><path d="M14 13V10C14 7 20 7 20 10" fill="none" stroke="#cfcfcf" stroke-width="1.5"/></g><g transform="translate(1767 1050)" fill="none" stroke="#c8c8c8" stroke-width="1.4"><rect x="1" y="1" width="8" height="8"/><circle cx="16" cy="9" r="4"/><path d="M9 12L13 21H5Z"/></g><circle cx="1810" cy="1061" r="10" fill="#1a6ad0"/><circle cx="1810" cy="1061" r="8" fill="#2a7ee0"/><path d="M1806 1065L1813 1058" stroke="#6ab0ff" stroke-width="1.5"/><g transform="translate(1832 1050)"><rect x="2" y="6" width="14" height="10" fill="#5a7ab8"/><rect x="0" y="13" width="14" height="8" fill="#f0e040"/><circle cx="5" cy="4" r="2.5" fill="#fff"/><path d="M5 4V14" stroke="#fff" stroke-width="1.2"/><path d="M9 17L13 21L20 12" fill="none" stroke="#40c040" stroke-width="2.4"/></g><g transform="translate(1863 1051)"><rect x="1" y="2" width="20" height="16" fill="none" stroke="#cfcfcf" stroke-width="1.4"/><path d="M4 15L9 10M4 15V11M4 15H8M18 5L13 10M18 5V9M18 5H14" fill="none" stroke="#cfcfcf" stroke-width="1.3"/></g><path d="M1895 1054H1914M1895 1061H1914M1895 1068H1914" stroke="#dcdcdc" stroke-width="2.3"/></svg>
<svg class="a" style="left:726.5px;top:1058.75px" width="9.0" height="4.5"><path d="M0 0H9.0L4.5 4.5Z" fill="#f0f0f0"/></svg>
<svg class="a" style="left:870.5px;top:1058.75px" width="9.0" height="4.5"><path d="M0 0H9.0L4.5 4.5Z" fill="#f0f0f0"/></svg>
<svg class="a" style="left:918.5px;top:1058.75px" width="9.0" height="4.5"><path d="M0 0H9.0L4.5 4.5Z" fill="#f0f0f0"/></svg>
<svg class="a" style="left:999.5px;top:1058.75px" width="9.0" height="4.5"><path d="M0 0H9.0L4.5 4.5Z" fill="#f0f0f0"/></svg>
<svg class="a" style="left:1142.5px;top:1058.75px" width="9.0" height="4.5"><path d="M0 0H9.0L4.5 4.5Z" fill="#f0f0f0"/></svg>
<svg class="a" style="left:1224.5px;top:1058.75px" width="9.0" height="4.5"><path d="M0 0H9.0L4.5 4.5Z" fill="#f0f0f0"/></svg>
<svg class="a" style="left:1273.5px;top:1058.75px" width="9.0" height="4.5"><path d="M0 0H9.0L4.5 4.5Z" fill="#f0f0f0"/></svg>
<svg class="a" style="left:1508.5px;top:1058.75px" width="9.0" height="4.5"><path d="M0 0H9.0L4.5 4.5Z" fill="#f0f0f0"/></svg>
<svg class="a" style="left:1746.5px;top:1058.75px" width="9.0" height="4.5"><path d="M0 0H9.0L4.5 4.5Z" fill="#f0f0f0"/></svg>
<svg class="a" style="left:1456.5px;top:1058.75px" width="9.0" height="4.5"><path d="M0 0H9.0L4.5 4.5Z" fill="#f0f0f0"/></svg>
<svg class="a" style="left:1663.5px;top:1058.75px" width="9.0" height="4.5"><path d="M0 0H9.0L4.5 4.5Z" fill="#f0f0f0"/></svg>
<div class="t" style="left:1387px;top:1054.73px;font-size:14.5px;color:#e4e4e4;font-weight:normal;font-style:normal;font-family:'Liberation Sans';">1:1 / 100%</div>
<div class="t" style="left:1594px;top:1054.73px;font-size:14.5px;color:#e4e4e4;font-weight:normal;font-style:normal;font-family:'Liberation Sans';">Decimal</div>
<svg class="a" style="left:0;top:0" width="1920" height="1080"><g transform="translate(890 615.7) rotate(-45)"><rect x="0" y="0" width="132" height="167" fill="none" stroke="#e08c2e" stroke-width="1.4"/><path d="M0 2.8H132" stroke="#e08c2e" stroke-width="1.2"/><path d="M3.5 22V160A4 4 0 0 0 7.5 164H124.5A4 4 0 0 0 128.5 160V22A3 3 0 0 0 125.5 19H6.5A3 3 0 0 0 3.5 22Z" fill="none" stroke="#e08c2e" stroke-width="1.2"/><path d="M10 2.8V19M14 2.8V19" stroke="#e08c2e" stroke-width="1.1"/><path d="M58 2.8V19M62 2.8V19" stroke="#e08c2e" stroke-width="1.1"/><path d="M118 2.8V19M122 2.8V19" stroke="#e08c2e" stroke-width="1.1"/><path d="M21 11C31 14 45 12 55 9C58 8 59 10 58 13C56 24 58 35 60 43C61 46 59 47 57 46C45 43 33 44 22 46C19 47 18 45 19 43C21 33 21 22 18 14C18 11 19 11 21 11Z" fill="#212530" stroke="#e08c2e" stroke-width="1.2"/><path d="M25 24C35 22 45 23 52 27M30 40C40 38 50 39 55 42" fill="none" stroke="#e08c2e" stroke-width="1"/><path d="M76 9C87 12 101 11 112 9C115 8 116 10 115 13C113 24 115 35 117 43C118 46 116 47 114 46C102 42 88 43 76 45C73 46 72 44 73 42C75 32 75 21 73 13C72 10 73 9 76 9Z" fill="#212530" stroke="#e08c2e" stroke-width="1.2"/><path d="M80 22C90 20 100 21 108 25M86 38C96 37 104 38 110 41" fill="none" stroke="#e08c2e" stroke-width="1"/><path d="M14 36C10 70 8 120 10 157C50 160 90 160 123 159C105 128 85 95 69 66C50 60 30 50 14 36Z" fill="none" stroke="#e08c2e" stroke-width="1.2"/><path d="M93 41L69 66C85 98 103 128 123 159C115 115 103 75 93 41Z" fill="#212530" stroke="#e08c2e" stroke-width="1.2"/><g fill="#e08c2e"><circle cx="46.6" cy="62.3" r="0.55"/><circle cx="18.2" cy="106.6" r="0.55"/><circle cx="16.6" cy="103.4" r="0.55"/><circle cx="20.3" cy="93.8" r="1.2"/><circle cx="24.0" cy="70.7" r="0.55"/><circle cx="54.8" cy="157.3" r="0.55"/><circle cx="26.3" cy="58.5" r="0.55"/><circle cx="75.7" cy="118.5" r="0.55"/><circle cx="16.7" cy="68.7" r="0.55"/><circle cx="58.3" cy="81.1" r="0.55"/><circle cx="61.2" cy="79.5" r="0.55"/><circle cx="74.9" cy="105.4" r="1.2"/><circle cx="57.2" cy="132.1" r="0.55"/><circle cx="85.5" cy="132.9" r="0.55"/><circle cx="88.6" cy="113.4" r="0.55"/><circle cx="61.6" cy="141.6" r="1.2"/><circle cx="63.6" cy="121.4" r="0.55"/><circle cx="89.3" cy="119.4" r="1.2"/><circle cx="53.6" cy="121.9" r="0.55"/><circle cx="62.2" cy="64.3" r="0.55"/><circle cx="16.7" cy="133.3" r="0.55"/><circle cx="38.0" cy="90.0" r="1.2"/><circle cx="19.1" cy="96.7" r="0.55"/><circle cx="109.8" cy="139.2" r="1.2"/><circle cx="41.5" cy="92.8" r="0.55"/><circle cx="109.9" cy="155.1" r="0.55"/><circle cx="29.9" cy="71.7" r="0.55"/><circle cx="64.8" cy="112.7" r="0.55"/><circle cx="51.7" cy="110.1" r="1.2"/><circle cx="88.0" cy="104.3" r="0.55"/><circle cx="108.8" cy="136.8" r="0.55"/><circle cx="17.6" cy="69.0" r="0.55"/><circle cx="21.5" cy="86.8" r="0.55"/><circle cx="26.8" cy="74.0" r="0.55"/><circle cx="62.7" cy="100.6" r="0.55"/><circle cx="21.5" cy="84.4" r="0.55"/><circle cx="12.6" cy="154.4" r="0.55"/><circle cx="26.6" cy="107.5" r="0.55"/><circle cx="69.7" cy="157.5" r="1.2"/><circle cx="51.4" cy="64.2" r="0.55"/><circle cx="70.2" cy="134.6" r="0.55"/><circle cx="35.2" cy="138.3" r="1.2"/><circle cx="106.3" cy="137.7" r="1.2"/><circle cx="68.5" cy="85.9" r="0.55"/><circle cx="13.2" cy="77.1" r="0.55"/><circle cx="88.3" cy="155.0" r="0.55"/><circle cx="115.9" cy="158.6" r="1.2"/><circle cx="51.2" cy="70.4" r="0.55"/><circle cx="32.2" cy="68.5" r="0.55"/><circle cx="111.7" cy="141.7" r="0.55"/><circle cx="83.8" cy="137.0" r="0.55"/><circle cx="84.6" cy="149.6" r="0.55"/><circle cx="30.2" cy="135.8" r="0.55"/><circle cx="100.5" cy="156.7" r="0.55"/><circle cx="55.4" cy="153.9" r="0.55"/><circle cx="29.2" cy="59.6" r="0.55"/><circle cx="26.5" cy="140.0" r="1.2"/><circle cx="11.6" cy="156.7" r="0.55"/><circle cx="69.5" cy="152.4" r="0.55"/><circle cx="108.5" cy="140.0" r="0.55"/><circle cx="38.5" cy="78.7" r="0.55"/><circle cx="61.8" cy="112.1" r="1.2"/><circle cx="57.5" cy="150.5" r="0.55"/><circle cx="70.1" cy="105.2" r="0.55"/><circle cx="59.7" cy="66.1" r="0.55"/><circle cx="63.5" cy="128.4" r="0.55"/><circle cx="46.8" cy="104.6" r="0.55"/><circle cx="73.3" cy="73.6" r="0.55"/><circle cx="73.5" cy="132.4" r="1.2"/><circle cx="60.1" cy="115.4" r="0.55"/><circle cx="67.9" cy="124.7" r="0.55"/><circle cx="70.3" cy="100.0" r="1.2"/><circle cx="89.0" cy="145.8" r="1.2"/><circle cx="39.3" cy="109.3" r="1.2"/><circle cx="23.7" cy="95.8" r="0.55"/><circle cx="85.7" cy="135.2" r="1.2"/><circle cx="27.5" cy="127.4" r="0.55"/><circle cx="26.2" cy="146.5" r="1.2"/><circle cx="34.8" cy="154.5" r="0.55"/><circle cx="58.8" cy="104.3" r="0.55"/><circle cx="32.1" cy="81.6" r="0.55"/><circle cx="12.2" cy="108.7" r="0.55"/><circle cx="80.5" cy="103.9" r="0.55"/><circle cx="24.6" cy="93.6" r="1.2"/><circle cx="26.9" cy="150.7" r="0.55"/><circle cx="16.5" cy="124.1" r="0.55"/><circle cx="18.2" cy="152.9" r="0.55"/><circle cx="48.3" cy="108.6" r="1.2"/><circle cx="40.3" cy="59.9" r="0.55"/><circle cx="36.9" cy="57.6" r="0.55"/><circle cx="15.7" cy="68.2" r="0.55"/><circle cx="44.5" cy="132.3" r="0.55"/><circle cx="66.5" cy="65.5" r="0.55"/><circle cx="11.7" cy="129.3" r="0.55"/><circle cx="31.4" cy="99.6" r="1.2"/><circle cx="22.0" cy="139.2" r="0.55"/><circle cx="65.9" cy="141.0" r="0.55"/><circle cx="67.3" cy="124.1" r="1.2"/><circle cx="48.7" cy="140.7" r="0.55"/><circle cx="81.9" cy="91.5" r="0.55"/><circle cx="16.1" cy="59.9" r="0.55"/><circle cx="28.4" cy="54.7" r="1.2"/><circle cx="41.9" cy="72.9" r="0.55"/><circle cx="60.4" cy="75.3" r="1.2"/><circle cx="37.6" cy="156.1" r="0.55"/><circle cx="53.1" cy="99.6" r="0.55"/><circle cx="32.7" cy="103.0" r="0.55"/><circle cx="36.3" cy="112.3" r="0.55"/><circle cx="94.8" cy="120.6" r="0.55"/><circle cx="26.9" cy="128.3" r="0.55"/><circle cx="14.9" cy="141.1" r="1.2"/><circle cx="80.9" cy="129.4" r="1.2"/><circle cx="25.7" cy="105.2" r="0.55"/><circle cx="104.3" cy="137.5" r="1.2"/><circle cx="76.0" cy="147.7" r="0.55"/><circle cx="13.5" cy="60.3" r="0.55"/><circle cx="21.9" cy="141.1" r="0.55"/><circle cx="80.9" cy="117.0" r="0.55"/><circle cx="100.1" cy="131.1" r="0.55"/><circle cx="70.5" cy="120.8" r="0.55"/><circle cx="18.4" cy="75.5" r="0.55"/><circle cx="33.2" cy="130.1" r="1.2"/><circle cx="65.8" cy="89.0" r="0.55"/><circle cx="87.3" cy="133.2" r="0.55"/><circle cx="26.7" cy="74.2" r="0.55"/><circle cx="44.4" cy="110.3" r="0.55"/><circle cx="16.9" cy="75.9" r="0.55"/><circle cx="88.2" cy="122.7" r="0.55"/><circle cx="68.4" cy="98.4" r="0.55"/><circle cx="23.4" cy="147.8" r="0.55"/><circle cx="102.6" cy="156.3" r="0.55"/><circle cx="40.4" cy="69.1" r="1.2"/><circle cx="33.8" cy="111.9" r="0.55"/><circle cx="69.2" cy="154.6" r="0.55"/><circle cx="36.1" cy="148.2" r="0.55"/><circle cx="65.6" cy="96.8" r="0.55"/><circle cx="25.9" cy="84.6" r="0.55"/><circle cx="94.8" cy="141.5" r="0.55"/><circle cx="52.1" cy="90.2" r="1.2"/><circle cx="76.6" cy="86.5" r="0.55"/><circle cx="21.5" cy="141.0" r="0.55"/><circle cx="40.0" cy="103.8" r="0.55"/><circle cx="52.2" cy="155.0" r="1.2"/><circle cx="113.2" cy="153.2" r="0.55"/><circle cx="95.1" cy="119.1" r="0.55"/><circle cx="15.5" cy="151.6" r="0.55"/><circle cx="63.4" cy="84.5" r="0.55"/><circle cx="93.5" cy="157.3" r="0.55"/><circle cx="73.0" cy="90.4" r="0.55"/><circle cx="28.3" cy="68.9" r="1.2"/><circle cx="66.2" cy="70.3" r="1.2"/><circle cx="25.8" cy="67.1" r="0.55"/><circle cx="37.0" cy="74.7" r="0.55"/><circle cx="56.6" cy="92.6" r="0.55"/><circle cx="52.6" cy="83.9" r="0.55"/><circle cx="41.4" cy="156.3" r="0.55"/><circle cx="66.9" cy="117.4" r="1.2"/><circle cx="34.4" cy="76.2" r="0.55"/><circle cx="55.2" cy="96.3" r="1.2"/><circle cx="105.9" cy="145.4" r="0.55"/><circle cx="13.6" cy="126.6" r="1.2"/><circle cx="63.5" cy="112.5" r="0.55"/><circle cx="54.2" cy="151.6" r="1.2"/><circle cx="106.7" cy="156.8" r="0.55"/><circle cx="22.3" cy="62.8" r="0.55"/><circle cx="87.1" cy="153.3" r="0.55"/><circle cx="83.2" cy="133.0" r="0.55"/><circle cx="44.3" cy="59.7" r="0.55"/><circle cx="81.9" cy="125.3" r="0.55"/><circle cx="17.9" cy="105.3" r="0.55"/><circle cx="53.9" cy="70.7" r="0.55"/><circle cx="62.1" cy="155.3" r="0.55"/><circle cx="36.5" cy="73.4" r="1.2"/><circle cx="12.5" cy="102.3" r="0.55"/><circle cx="57.5" cy="74.6" r="0.55"/><circle cx="13.9" cy="83.9" r="0.55"/><circle cx="100.1" cy="130.0" r="0.55"/><circle cx="33.2" cy="156.5" r="0.55"/><circle cx="35.0" cy="132.5" r="0.55"/><circle cx="31.2" cy="70.7" r="0.55"/><circle cx="85.2" cy="154.1" r="0.55"/><circle cx="54.5" cy="69.5" r="1.2"/><circle cx="26.0" cy="51.0" r="0.55"/><circle cx="54.4" cy="148.3" r="1.2"/><circle cx="31.0" cy="152.6" r="0.55"/><circle cx="13.6" cy="121.4" r="0.55"/><circle cx="52.2" cy="83.1" r="0.55"/><circle cx="49.7" cy="154.9" r="0.55"/><circle cx="50.3" cy="139.5" r="1.2"/><circle cx="63.5" cy="87.9" r="1.2"/><circle cx="31.8" cy="86.9" r="1.2"/><circle cx="13.4" cy="92.2" r="1.2"/><circle cx="13.9" cy="52.2" r="1.2"/><circle cx="39.0" cy="130.9" r="1.2"/><circle cx="48.3" cy="76.3" r="1.2"/><circle cx="95.4" cy="150.4" r="0.55"/><circle cx="36.4" cy="99.6" r="1.2"/><circle cx="38.4" cy="94.4" r="0.55"/><circle cx="100.7" cy="129.9" r="1.2"/><circle cx="97.3" cy="114.8" r="0.55"/><circle cx="46.1" cy="86.6" r="0.55"/><circle cx="18.9" cy="67.7" r="0.55"/><circle cx="13.8" cy="108.5" r="0.55"/><circle cx="19.5" cy="56.1" r="0.55"/><circle cx="36.5" cy="92.9" r="0.55"/><circle cx="86.2" cy="131.0" r="1.2"/><circle cx="74.1" cy="87.9" r="0.55"/><circle cx="32.5" cy="73.5" r="0.55"/><circle cx="27.3" cy="146.7" r="0.55"/><circle cx="46.9" cy="90.5" r="1.2"/><circle cx="67.3" cy="71.6" r="1.2"/><circle cx="21.6" cy="99.6" r="1.2"/><circle cx="105.0" cy="150.2" r="0.55"/><circle cx="43.2" cy="58.7" r="0.55"/><circle cx="39.4" cy="134.4" r="1.2"/><circle cx="22.0" cy="113.6" r="0.55"/><circle cx="34.6" cy="87.4" r="0.55"/><circle cx="33.0" cy="74.3" r="0.55"/><circle cx="45.3" cy="68.4" r="0.55"/><circle cx="21.5" cy="90.5" r="0.55"/><circle cx="28.5" cy="125.0" r="0.55"/><circle cx="42.0" cy="80.4" r="1.2"/><circle cx="45.3" cy="110.1" r="0.55"/><circle cx="57.1" cy="144.4" r="1.2"/><circle cx="51.1" cy="67.7" r="0.55"/><circle cx="72.3" cy="118.7" r="1.2"/><circle cx="20.1" cy="116.6" r="0.55"/><circle cx="42.0" cy="104.9" r="1.2"/><circle cx="22.3" cy="101.4" r="1.2"/><circle cx="24.3" cy="153.5" r="1.2"/></g></g></svg>
</body></html>
